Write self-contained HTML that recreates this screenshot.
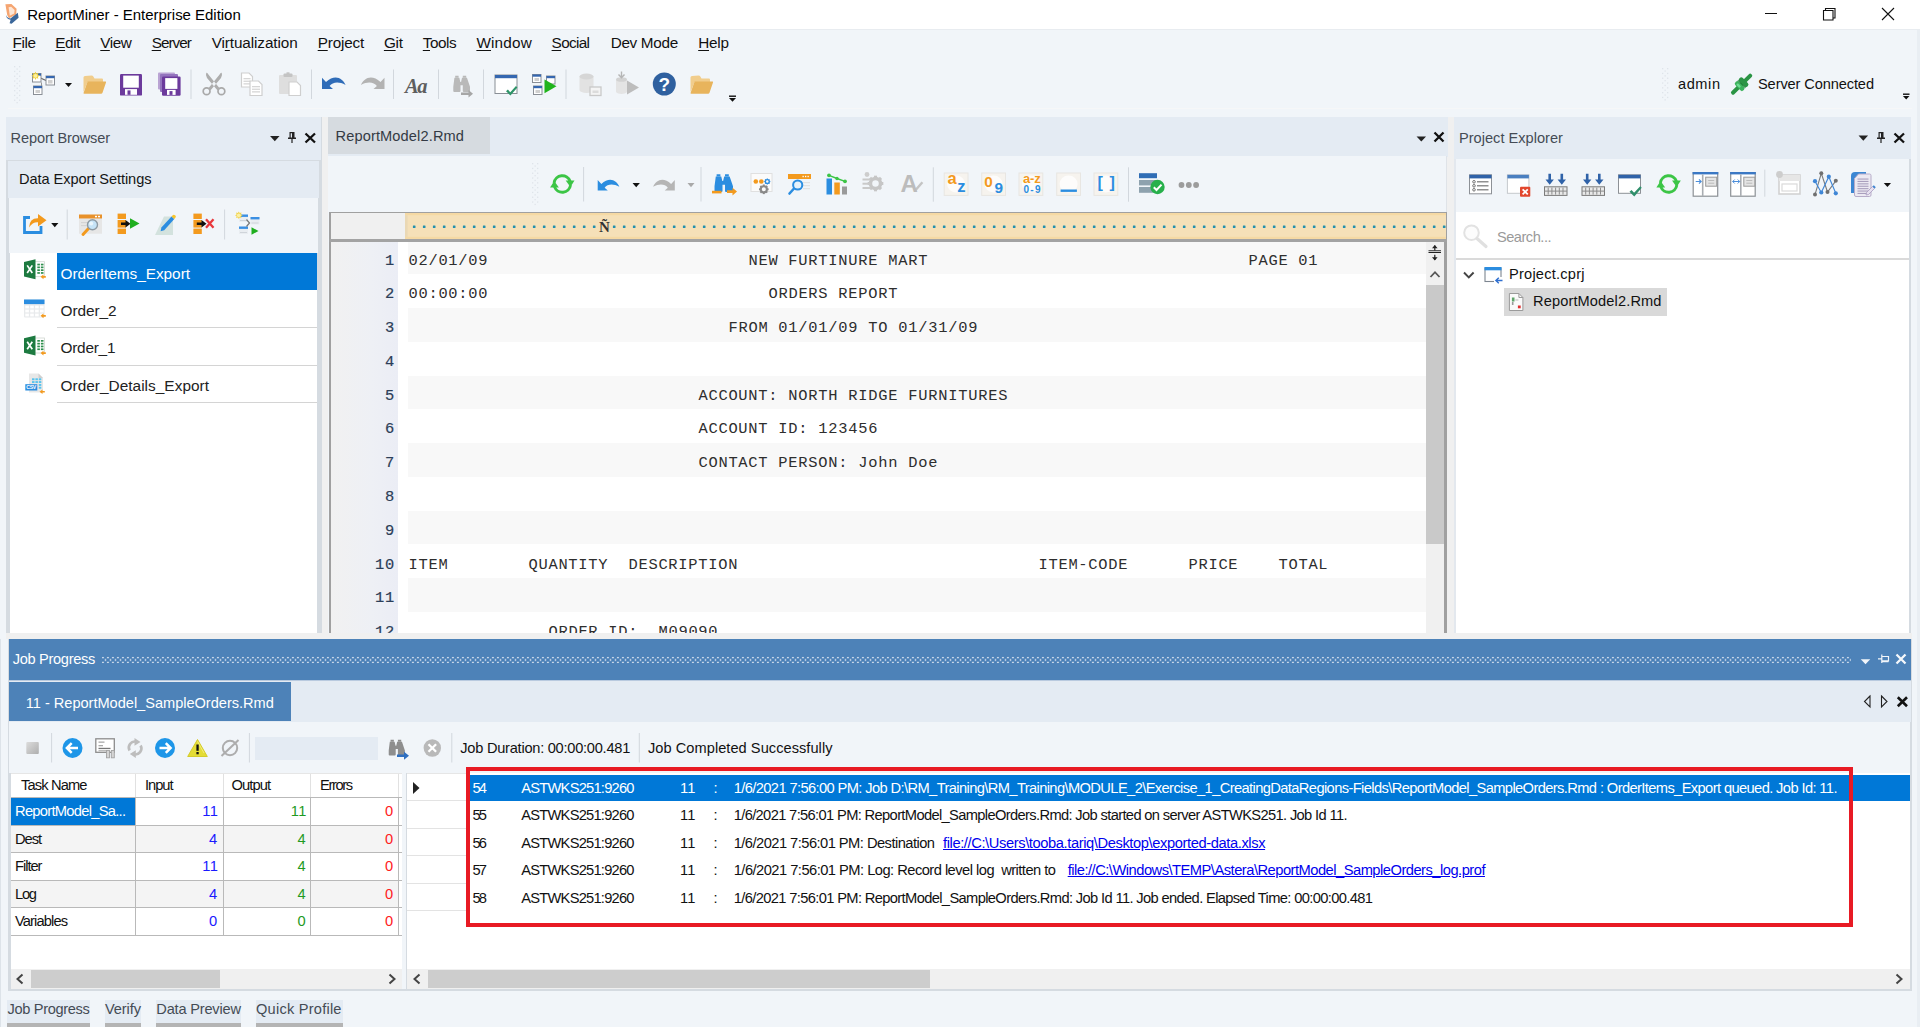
<!DOCTYPE html><html><head><meta charset="utf-8"><title>ReportMiner - Enterprise Edition</title><style>

html,body{margin:0;padding:0;}
body{width:1920px;height:1027px;overflow:hidden;background:#f1f5f9;position:relative;font-family:"Liberation Sans",sans-serif;}
#r div,#r svg,#r span{position:absolute;}
#r span{white-space:pre;line-height:1;}
#r span u{text-decoration:underline;text-underline-offset:2px;text-decoration-thickness:1px;}
#r span a{color:#0000ee;text-decoration:underline;}

</style></head><body><div id="r">
<div style="left:0px;top:0px;width:1920px;height:29px;background:#fff;"></div>
<div style="left:0px;top:29px;width:1920px;height:1px;background:#e8ecf0;"></div>
<div style="left:8px;top:108px;width:1904px;height:1px;background:#f6f7f8;"></div>
<div style="left:1917px;top:30px;width:3px;height:997px;background:#e9eef3;"></div>
<div style="left:0px;top:639px;width:1px;height:388px;background:#dde3e9;"></div>
<div style="left:321px;top:117px;width:7px;height:516px;background:#f0f0f0;"></div>
<div style="left:1447px;top:117px;width:7.3px;height:516px;background:#f0f0f0;"></div>
<div style="left:6px;top:117px;width:315.5px;height:516px;background:#d5dbe1;"></div>
<div style="left:6px;top:117px;width:315px;height:43px;background:#e4ebf3;"></div>
<div style="left:8px;top:161px;width:311px;height:37px;background:#e4ebf3;"></div>
<div style="left:9px;top:198px;width:309px;height:55px;background:#f1f5f9;"></div>
<div style="left:10px;top:253px;width:307px;height:380px;background:#fff;"></div>
<div style="left:57px;top:253px;width:260px;height:36.5px;background:#0078d7;"></div>
<div style="left:57px;top:327px;width:260px;height:1px;background:#d4d4d4;"></div>
<div style="left:57px;top:364.5px;width:260px;height:1px;background:#d4d4d4;"></div>
<div style="left:57px;top:402px;width:260px;height:1px;background:#d4d4d4;"></div>
<div style="left:328px;top:117px;width:1120px;height:39.5px;background:#e4ebf3;"></div>
<div style="left:328px;top:117px;width:162.4px;height:36.8px;background:#d6dbe0;"></div>
<div style="left:328px;top:156px;width:1119px;height:56px;background:#f1f5f9;"></div>
<div style="left:1446px;top:156px;width:1px;height:56px;background:#dfe3e8;"></div>
<div style="left:329px;top:212px;width:1117.5px;height:421px;background:#a0a0a0;"></div>
<div style="left:330.8px;top:213.3px;width:74.6px;height:26px;background:#f0f0f0;"></div>
<div style="left:405.4px;top:213.3px;width:1040.5px;height:26px;background:#f5e0b8;box-shadow:inset 0 2.3px 0 0 #f5d9a4,inset 0 -2.3px 0 0 #f5d9a4,inset 2.600px 0 0 0 #ead8b4;"></div>
<div style="left:329px;top:239.2px;width:1117.5px;height:2.5px;background:#a3a3a3;"></div>
<div style="left:330.8px;top:241.7px;width:1113.5px;height:391.3px;background:#fff;"></div>
<div style="left:330.8px;top:241.7px;width:67.2px;height:391.3px;background:linear-gradient(90deg,#f1f1f1 0%,#eef0f5 60%,#ebedf5 100%);"></div>
<div style="left:408px;top:241.7px;width:1018px;height:32.5px;background:#f8f8f8;"></div>
<div style="left:408px;top:308.0px;width:1018px;height:33.8px;background:#f8f8f8;"></div>
<div style="left:408px;top:375.5px;width:1018px;height:33.8px;background:#f8f8f8;"></div>
<div style="left:408px;top:443.1px;width:1018px;height:33.8px;background:#f8f8f8;"></div>
<div style="left:408px;top:510.6px;width:1018px;height:33.8px;background:#f8f8f8;"></div>
<div style="left:408px;top:578.2px;width:1018px;height:33.8px;background:#f8f8f8;"></div>
<div style="left:1426px;top:241.7px;width:18.3px;height:391.3px;background:#f0f0f0;"></div>
<div style="left:1426px;top:285px;width:18.3px;height:259px;background:#c9c9c9;"></div>
<div style="left:1454px;top:117px;width:457px;height:516px;background:#d5dbe1;"></div>
<div style="left:1454px;top:117px;width:457px;height:42px;background:#e4ebf3;"></div>
<div style="left:1456px;top:159px;width:453px;height:53px;background:#f1f5f9;"></div>
<div style="left:1456px;top:212px;width:453px;height:46px;background:#fff;"></div>
<div style="left:1456px;top:258px;width:453px;height:2px;background:#dadada;"></div>
<div style="left:1456px;top:260px;width:453px;height:373px;background:#fff;"></div>
<div style="left:1504px;top:288.4px;width:163px;height:27.2px;background:#d9d9d9;"></div>
<div style="left:1454px;top:159px;width:2px;height:474px;background:#e3e8ee;"></div>
<div style="left:6px;top:633px;width:1906px;height:6px;background:#f0f0f0;"></div>
<div style="left:8px;top:639px;width:1904px;height:352px;background:#d5dbe1;"></div>
<div style="left:9px;top:639px;width:1902px;height:41px;background:#4d82b8;"></div>
<div style="left:9px;top:680px;width:1902px;height:1px;background:#b9cadf;"></div>
<div style="left:9px;top:681px;width:1902px;height:41px;background:#e4ebf3;"></div>
<div style="left:9px;top:682px;width:282px;height:39px;background:#4d82b8;"></div>
<div style="left:9px;top:722px;width:1901px;height:51px;background:#f1f5f9;"></div>
<div style="left:11px;top:773px;width:391px;height:196px;background:#fff;"></div>
<div style="left:11px;top:969px;width:391px;height:20px;background:#f0f0f0;"></div>
<div style="left:31px;top:970px;width:189px;height:18px;background:#cdcdcd;"></div>
<div style="left:402px;top:773px;width:5px;height:216px;background:#f1f5f9;"></div>
<div style="left:406px;top:773px;width:1px;height:216px;background:#d5dbe1;"></div>
<div style="left:407px;top:773px;width:1503px;height:196px;background:#fff;"></div>
<div style="left:407px;top:969px;width:1503px;height:20px;background:#f0f0f0;"></div>
<div style="left:428px;top:970px;width:502px;height:18px;background:#cdcdcd;"></div>
<div style="left:11px;top:824.6px;width:387px;height:27.600000000000023px;background:#f4f4f4;"></div>
<div style="left:11px;top:879.8px;width:387px;height:27.600000000000023px;background:#f4f4f4;"></div>
<div style="left:11px;top:797px;width:124px;height:27.6px;background:#0078d7;"></div>
<div style="left:11px;top:797px;width:391px;height:1px;background:#b9b9b9;"></div>
<div style="left:11px;top:824.6px;width:391px;height:1px;background:#b9b9b9;"></div>
<div style="left:11px;top:852.2px;width:391px;height:1px;background:#b9b9b9;"></div>
<div style="left:11px;top:879.8px;width:391px;height:1px;background:#b9b9b9;"></div>
<div style="left:11px;top:907.4px;width:391px;height:1px;background:#b9b9b9;"></div>
<div style="left:11px;top:935px;width:391px;height:1px;background:#b9b9b9;"></div>
<div style="left:135px;top:797px;width:1px;height:138px;background:#b9b9b9;"></div>
<div style="left:223px;top:797px;width:1px;height:138px;background:#b9b9b9;"></div>
<div style="left:310px;top:797px;width:1px;height:138px;background:#b9b9b9;"></div>
<div style="left:398px;top:797px;width:1px;height:138px;background:#b9b9b9;"></div>
<div style="left:135px;top:773px;width:1px;height:24px;background:#e1e1e1;"></div>
<div style="left:223px;top:773px;width:1px;height:24px;background:#e1e1e1;"></div>
<div style="left:310px;top:773px;width:1px;height:24px;background:#e1e1e1;"></div>
<div style="left:398px;top:773px;width:1px;height:24px;background:#e1e1e1;"></div>
<div style="left:11px;top:773px;width:391px;height:1px;background:#e6e6e6;"></div>
<div style="left:407px;top:773px;width:60px;height:1px;background:#e6e6e6;"></div>
<div style="left:407px;top:800.4px;width:60px;height:1px;background:#e3e3e3;"></div>
<div style="left:407px;top:827.8px;width:60px;height:1px;background:#e3e3e3;"></div>
<div style="left:407px;top:855.2px;width:60px;height:1px;background:#e3e3e3;"></div>
<div style="left:407px;top:882.6px;width:60px;height:1px;background:#e3e3e3;"></div>
<div style="left:407px;top:910px;width:60px;height:1px;background:#e3e3e3;"></div>
<div style="left:466px;top:774.5px;width:1444px;height:26px;background:#0078d7;"></div>
<div style="left:466px;top:767px;width:1387px;height:160px;background:transparent;border:4px solid #e81a24;box-sizing:border-box;"></div>
<div style="left:7px;top:1000px;width:83px;height:23px;background:#e4ebf3;"></div>
<div style="left:7px;top:1023px;width:83px;height:4px;background:#b4b4b4;"></div>
<div style="left:105px;top:1000px;width:36px;height:23px;background:#e4ebf3;"></div>
<div style="left:105px;top:1023px;width:36px;height:4px;background:#b4b4b4;"></div>
<div style="left:156px;top:1000px;width:85px;height:23px;background:#e4ebf3;"></div>
<div style="left:156px;top:1023px;width:85px;height:4px;background:#b4b4b4;"></div>
<div style="left:256px;top:1000px;width:87px;height:23px;background:#e4ebf3;"></div>
<div style="left:256px;top:1023px;width:87px;height:4px;background:#b4b4b4;"></div>
<div style="left:255px;top:737px;width:122.5px;height:22.5px;background:#e4ebf3;"></div>
<svg style="left:0;top:0" width="1920" height="1027" viewBox="0 0 1920 1027"><path d="M5.400 4.200L11.400 4L16.600 8.800L16.200 14.600L9 18.200L7.200 15z" fill="#f5a571"/><path d="M8.600 7.200L11.200 6.800L14.600 10L14.200 13.600L9.800 15.800z" fill="#fde6d6"/><path d="M5.800 14.600Q7 18.600 10.400 18.400L17.800 12.800L18.600 17.800L11.600 23.800L9.600 23.200L10.600 19.800Q6.400 19.600 5.800 14.600z" fill="#3b679b"/><path d="M1765 13.5h12" stroke="#111" stroke-width="1"/><path d="M1823.5 10.5h9.500v9.500h-9.500z M1825.500 10.500v-2h9.500v9.500h-2" fill="none" stroke="#111" stroke-width="1.1"/><path d="M1882 8l12 12M1894 8l-12 12" stroke="#111" stroke-width="1.1"/><rect x="14" y="66.0" width="1.300" height="1.300" fill="#dfe4ea"/><rect x="19" y="66.0" width="1.300" height="1.300" fill="#dfe4ea"/><rect x="16.5" y="68.4" width="1.300" height="1.300" fill="#dfe4ea"/><rect x="14" y="70.8" width="1.300" height="1.300" fill="#dfe4ea"/><rect x="19" y="70.8" width="1.300" height="1.300" fill="#dfe4ea"/><rect x="16.5" y="73.2" width="1.300" height="1.300" fill="#dfe4ea"/><rect x="14" y="75.6" width="1.300" height="1.300" fill="#dfe4ea"/><rect x="19" y="75.6" width="1.300" height="1.300" fill="#dfe4ea"/><rect x="16.5" y="78.0" width="1.300" height="1.300" fill="#dfe4ea"/><rect x="14" y="80.4" width="1.300" height="1.300" fill="#dfe4ea"/><rect x="19" y="80.4" width="1.300" height="1.300" fill="#dfe4ea"/><rect x="16.5" y="82.8" width="1.300" height="1.300" fill="#dfe4ea"/><rect x="14" y="85.2" width="1.300" height="1.300" fill="#dfe4ea"/><rect x="19" y="85.2" width="1.300" height="1.300" fill="#dfe4ea"/><rect x="16.5" y="87.6" width="1.300" height="1.300" fill="#dfe4ea"/><rect x="14" y="90.0" width="1.300" height="1.300" fill="#dfe4ea"/><rect x="19" y="90.0" width="1.300" height="1.300" fill="#dfe4ea"/><rect x="16.5" y="92.4" width="1.300" height="1.300" fill="#dfe4ea"/><rect x="14" y="94.8" width="1.300" height="1.300" fill="#dfe4ea"/><rect x="19" y="94.8" width="1.300" height="1.300" fill="#dfe4ea"/><rect x="16.5" y="97.2" width="1.300" height="1.300" fill="#dfe4ea"/><rect x="14" y="99.6" width="1.300" height="1.300" fill="#dfe4ea"/><rect x="19" y="99.6" width="1.300" height="1.300" fill="#dfe4ea"/><rect x="16.5" y="102.0" width="1.300" height="1.300" fill="#dfe4ea"/><path d="M36 76L46 80.500" stroke="#666" stroke-width="1.3"/><path d="M41.500 82.500v7.500" stroke="#999" stroke-width="1"/><rect x="32.5" y="73.5" width="8.5" height="8.5" fill="#fff" stroke="#8a8f96" stroke-width="1"/><rect x="32.5" y="73.5" width="8.5" height="2.2" fill="#3567b0"/><rect x="46" y="76" width="8.5" height="9" fill="#fff" stroke="#8a8f96" stroke-width="1"/><rect x="46" y="76" width="8.5" height="2.2" fill="#3567b0"/><rect x="33.5" y="86" width="8.5" height="8.5" fill="#fff" stroke="#8a8f96" stroke-width="1"/><rect x="33.5" y="86" width="8.5" height="2.2" fill="#3567b0"/><path d="M35.5 71.600l.9 1.900 2-.6-.6 2 1.900.9-1.900.9.600 2-2-.6-.9 1.900-.9-1.900-2 .6.600-2-1.900-.9 1.900-.9-.6-2 2 .6z" fill="#f2d23f"/><circle cx="35.5" cy="75.800" r="1.900" fill="#fbf0a0"/><rect x="48" y="80" width="4.500" height="3.500" fill="#d0d0d0"/><rect x="35.5" y="90" width="4.500" height="3" fill="#d0d0d0"/><path d="M65.0 83h7l-3.5 4z" fill="#111"/><g transform="translate(83,75) scale(1.0)"><path d="M0.5 2.5Q0.5 1 2 1L8.5 0.5Q9.8 0.5 10.5 1.8L11.5 3.5L19 3.5Q20 3.5 20 4.8L20 7L4.5 7L0.5 17z" fill="#f1cd8c"/><path d="M4.6 6.5L22.6 6.5Q23.3 6.5 23 7.4L19.4 18Q19.1 18.8 18.2 18.8L1.2 18.8Q0.2 18.8 0.6 17.8z" fill="#e8b45c"/></g><g transform="translate(120,74)"><path d="M0 1.2Q0 0 1.2 0L20.8 0Q22 0 22 1.2L22 20.400000000000002Q22 21.6 20.8 21.6L1.2 21.6Q0 21.6 0 20.400000000000002z" fill="#6c3a9c"/><rect x="3.2" y="1.6" width="15.6" height="12.1" fill="#fff"/><rect x="5" y="15.1" width="12" height="5.7" fill="#fff"/><rect x="7.5" y="16.4" width="3" height="4.4" fill="#6c3a9c"/></g><rect x="158" y="72.500" width="17" height="17" rx="1" fill="#b9a3d3"/><rect x="160" y="74" width="18" height="18" rx="1" fill="#9474bd"/><g transform="translate(162,76.5)"><path d="M0 1.2Q0 0 1.2 0L17.400000000000002 0Q18.6 0 18.6 1.2L18.6 18.0Q18.6 19.2 17.400000000000002 19.2L1.2 19.2Q0 19.2 0 18.0z" fill="#6c3a9c"/><rect x="3.2" y="1.6" width="12.200000000000001" height="10.8" fill="#fff"/><rect x="5" y="13.4" width="8.600000000000001" height="5.0" fill="#fff"/><rect x="7.5" y="14.6" width="3" height="3.8" fill="#6c3a9c"/></g><rect x="190.5" y="69.5" width="1" height="29.5" fill="#d2d7dd"/><g fill="none" stroke="#a9a9a9"><circle cx="206.600" cy="91.300" r="3.400" stroke-width="1.700"/><circle cx="221.400" cy="91.300" r="3.400" stroke-width="1.700"/></g><path d="M206.300 72.800Q207.600 72.600 208.400 74.600L219.800 88.600L217.400 90.300L207 78Q205.300 75 206.300 72.800z M221.700 72.800Q220.400 72.600 219.600 74.600L208.200 88.600L210.600 90.300L221 78Q222.700 75 221.700 72.800z" fill="#adadad"/><path d="M241.5 73h7.5l3.5 3.5v10.5h-11z" fill="#fff" stroke="#cfcfcf" stroke-width="1.2"/><rect x="243.5" y="78.0" width="7" height="1.300" fill="#d6d6d6"/><rect x="243.5" y="80.6" width="7" height="1.300" fill="#d6d6d6"/><rect x="243.5" y="83.2" width="7" height="1.300" fill="#d6d6d6"/><path d="M250 81h8.5l3.5 3.5v11.0h-12z" fill="#fff" stroke="#cfcfcf" stroke-width="1.2"/><rect x="252" y="86.0" width="8" height="1.300" fill="#d6d6d6"/><rect x="252" y="88.6" width="8" height="1.300" fill="#d6d6d6"/><rect x="252" y="91.2" width="8" height="1.300" fill="#d6d6d6"/><rect x="279" y="75" width="18" height="19" rx="1" fill="#dedede"/><rect x="283.500" y="73.500" width="9" height="3.500" rx="1" fill="#c4c4c4"/><rect x="286.500" y="72.300" width="3" height="2.500" fill="#c4c4c4"/><path d="M289 82h8.0l3.5 3.5v10.0h-11.5z" fill="#fff" stroke="#cfcfcf" stroke-width="1.2"/><rect x="311.0" y="69.5" width="1" height="29.5" fill="#d2d7dd"/><g transform="translate(322,75.5) scale(1.000,1.000)"><path d="M0 2.2L0 13.6L11 13.6L7.6 10.6C10.5 6.8 16.5 5.6 23.6 9.6C20.6 2.2 12.5 -1.6 4 6.6z" fill="#2f6cb8"/></g><g transform="translate(384.5,75.5) scale(-1,1) scale(1.000,1.000)"><path d="M0 2.2L0 13.6L11 13.6L7.6 10.6C10.5 6.8 16.5 5.6 23.6 9.6C20.6 2.2 12.5 -1.6 4 6.6z" fill="#b3b3b3"/></g><rect x="393.0" y="69.5" width="1" height="29.5" fill="#d2d7dd"/><rect x="438.0" y="69.5" width="1" height="29.5" fill="#d2d7dd"/><g transform="translate(451,75) scale(0.95)" fill="#b9b9b9"><path d="M4.4 0.8h3.6v2.2h-3.6z M12.4 0.8h3.6v2.2h-3.6z"/><path d="M3.6 3h5.2l1 4.4h0.8l1-4.4h5.2l3.2 9.4v4.4q0 1-1 1h-5.6q-1 0-1-1v-6h-2.4v6q0 1-1 1h-5.600q-1 0-1-1v-4.4z"/></g><path d="M461 92.500h7.500v-2.500l4.500 3.700-4.500 3.700v-2.500h-7.500z" fill="#a6a6a6"/><rect x="483.0" y="69.5" width="1" height="29.5" fill="#d2d7dd"/><rect x="495" y="75" width="22" height="18.5" fill="#fff" stroke="#8a8f96" stroke-width="1"/><rect x="495" y="75" width="22" height="3.2" fill="#3567b0"/><path transform="translate(506,86) scale(0.95)" d="M0 5.500L2 3.800L4.500 6.500L10.500 0L12 1.500L4.700 10z" fill="#2e9468"/><rect x="532.5" y="74.5" width="8.5" height="8" fill="#fff" stroke="#8a8f96" stroke-width="1"/><rect x="532.5" y="74.5" width="8.5" height="2.2" fill="#3567b0"/><rect x="546.5" y="76" width="8.5" height="8" fill="#fff" stroke="#8a8f96" stroke-width="1"/><rect x="546.5" y="76" width="8.5" height="2.2" fill="#3567b0"/><rect x="533.5" y="86" width="8.5" height="8.5" fill="#fff" stroke="#8a8f96" stroke-width="1"/><rect x="533.5" y="86" width="8.5" height="2.2" fill="#3567b0"/><rect x="534.500" y="78" width="4.500" height="3" fill="#d0d0d0"/><rect x="535.500" y="90" width="4.500" height="3" fill="#d0d0d0"/><path d="M544.500 79.500L556.500 86.300L544.500 93.200z" fill="#20b41c"/><rect x="565.5" y="69.5" width="1" height="29.5" fill="#d2d7dd"/><path d="M579.500 76.500v13.500a7 3 0 0 0 14 0v-13.500z" fill="#e2e2e2"/><ellipse cx="586.500" cy="76.500" rx="7" ry="3" fill="#d6d6d6"/><rect x="590" y="87" width="11" height="8.500" fill="#f4f4f4" stroke="#c9c9c9" stroke-width="1.300"/><rect x="592.500" y="90.500" width="6" height="2.500" fill="#dcdcdc"/><path d="M616 79.500v12a5.500 2.500 0 0 0 11 0v-12z" fill="#e4e4e4"/><ellipse cx="621.500" cy="79.500" rx="5.500" ry="2.300" fill="#d2d2d2"/><path d="M621.500 71.500v6M618.500 74.500l3 3.300 3-3.300" fill="none" stroke="#b5b5b5" stroke-width="1.400"/><path d="M627 80.500L639 87.500L627 94.500z" fill="#bdbdbd"/><circle cx="664.300" cy="84" r="11.500" fill="#2f609f"/><text x="664.300" y="91" font-family="Liberation Sans,sans-serif" font-weight="bold" font-size="19" fill="#fff" text-anchor="middle">?</text><g transform="translate(690,75) scale(1.0)"><path d="M0.5 2.5Q0.5 1 2 1L8.5 0.5Q9.8 0.5 10.5 1.8L11.5 3.5L19 3.5Q20 3.5 20 4.8L20 7L4.5 7L0.5 17z" fill="#f1cd8c"/><path d="M4.6 6.5L22.6 6.5Q23.3 6.5 23 7.4L19.4 18Q19.1 18.8 18.2 18.8L1.2 18.8Q0.2 18.8 0.6 17.8z" fill="#e8b45c"/></g><rect x="729" y="95.500" width="7" height="1.400" fill="#111"/><path d="M729.0 98h7l-3.5 3.8z" fill="#111"/><rect x="1662" y="68.0" width="1.300" height="1.300" fill="#dfe4ea"/><rect x="1667" y="68.0" width="1.300" height="1.300" fill="#dfe4ea"/><rect x="1664.5" y="70.4" width="1.300" height="1.300" fill="#dfe4ea"/><rect x="1662" y="72.8" width="1.300" height="1.300" fill="#dfe4ea"/><rect x="1667" y="72.8" width="1.300" height="1.300" fill="#dfe4ea"/><rect x="1664.5" y="75.2" width="1.300" height="1.300" fill="#dfe4ea"/><rect x="1662" y="77.6" width="1.300" height="1.300" fill="#dfe4ea"/><rect x="1667" y="77.6" width="1.300" height="1.300" fill="#dfe4ea"/><rect x="1664.5" y="80.0" width="1.300" height="1.300" fill="#dfe4ea"/><rect x="1662" y="82.4" width="1.300" height="1.300" fill="#dfe4ea"/><rect x="1667" y="82.4" width="1.300" height="1.300" fill="#dfe4ea"/><rect x="1664.5" y="84.8" width="1.300" height="1.300" fill="#dfe4ea"/><rect x="1662" y="87.2" width="1.300" height="1.300" fill="#dfe4ea"/><rect x="1667" y="87.2" width="1.300" height="1.300" fill="#dfe4ea"/><rect x="1664.5" y="89.6" width="1.300" height="1.300" fill="#dfe4ea"/><rect x="1662" y="92.0" width="1.300" height="1.300" fill="#dfe4ea"/><rect x="1667" y="92.0" width="1.300" height="1.300" fill="#dfe4ea"/><rect x="1664.5" y="94.4" width="1.300" height="1.300" fill="#dfe4ea"/><rect x="1662" y="96.8" width="1.300" height="1.300" fill="#dfe4ea"/><rect x="1667" y="96.8" width="1.300" height="1.300" fill="#dfe4ea"/><rect x="1664.5" y="99.2" width="1.300" height="1.300" fill="#dfe4ea"/><g transform="translate(1741.600,84.200) rotate(-44.5)"><rect x="-14" y="-2" width="28" height="4" rx="1.800" fill="#2a9444"/><rect x="-5.200" y="-5.700" width="5" height="11.400" rx="2.200" fill="#3cb25c"/><rect x="0.200" y="-5.700" width="5" height="11.400" rx="2.200" fill="#2b9445"/><rect x="-4.300" y="-3.600" width="2.400" height="5" rx="1.200" fill="#6fdc92"/><rect x="-0.300" y="-5.500" width="0.800" height="11" fill="#1d7a35"/></g><rect x="1903" y="93.500" width="6.500" height="1.400" fill="#111"/><path d="M1902.95 96h6.5l-3.25 3.5z" fill="#111"/><path d="M270.05 136h9.5l-4.75 5.2z" fill="#222"/><path d="M289.5 132h5v5.500h1.500v1.400h-3.400v4h-1.200v-4h-3.400v-1.400h1.500z M290.7 133.2v4.300h1.300v-4.300z" fill="#222" fill-rule="evenodd"/><path d="M305.5 133.5L315 142.5M315 133.5L305.5 142.5" stroke="#111" stroke-width="2.3" fill="none"/><path d="M1416.55 136.4h9.5l-4.75 5.2z" fill="#222"/><path d="M1434.5 132.5L1443.5 141.5M1443.5 132.5L1434.5 141.5" stroke="#111" stroke-width="2.3" fill="none"/><path d="M1858.55 135.6h9.5l-4.75 5.2z" fill="#222"/><path d="M1878.5 132h5v5.500h1.500v1.400h-3.400v4h-1.200v-4h-3.400v-1.400h1.500z M1879.7 133.2v4.300h1.300v-4.300z" fill="#222" fill-rule="evenodd"/><path d="M1894.5 133.5L1904 142.5M1904 133.5L1894.5 142.5" stroke="#111" stroke-width="2.3" fill="none"/><path d="M30 217.500h-5.500v15h16.500v-6.500" fill="none" stroke="#2b8de0" stroke-width="2.800"/><path d="M29 227.500Q29.500 218 38 218.200L38 214L46.500 220.200L38 226.400L38 222.300Q32.500 222 29 227.500z" fill="#f39a1e"/><path d="M51.199999999999996 223h7.2l-3.6 4.2z" fill="#111"/><rect x="66.7" y="209.5" width="1" height="30.0" fill="#d2d7dd"/><rect x="79" y="214.500" width="23" height="4.200" fill="#e8912a"/><rect x="79" y="218.700" width="23" height="15" fill="#e6e6e6"/><rect x="95" y="215.800" width="2" height="1.500" fill="#fff"/><rect x="98" y="215.800" width="2" height="1.500" fill="#fff"/><rect x="81" y="222" width="7" height="1.200" fill="#d4d4d4"/><rect x="81" y="225" width="6" height="1.200" fill="#d4d4d4"/><path d="M88.500 228.500L83 234.500" stroke="#f39a1e" stroke-width="3" stroke-linecap="round"/><circle cx="92.500" cy="224.800" r="5" fill="#c6e4f8" stroke="#8e9aa3" stroke-width="1.400"/><circle cx="91.200" cy="223.500" r="2" fill="#eaf6fd"/><rect x="117.6" y="213.6" width="8.400" height="5.4" fill="#f39a1e"/><rect x="117.6" y="220" width="8.400" height="7.6" fill="#f39a1e"/><rect x="117.6" y="228.6" width="8.400" height="5.4" fill="#f39a1e"/><path d="M121 222.5h4.5v-2.400l5 3.700-5 3.700v-2.400h-4.5z" fill="#111"/><path d="M130 218.300L139.500 223.500L130 228.700z" fill="#1fae1f"/><path d="M155 235L173 235L173 216.500L164 216.500z" fill="#d3e2de"/><path d="M161.400 227.600L171.500 216.500L174.300 219L164.200 230.200L160.600 231.300z" fill="#2b8de0"/><path d="M171.500 216.500L173 214.900Q174 214.300 175 215.200L175.600 215.800Q176.300 216.800 175.500 217.600L174.300 219z" fill="#f7c52e"/><rect x="193.4" y="213.6" width="8.400" height="5.4" fill="#f39a1e"/><rect x="193.4" y="220" width="8.400" height="7.6" fill="#f39a1e"/><rect x="193.4" y="228.6" width="8.400" height="5.4" fill="#f39a1e"/><path d="M196.8 222.5h4.699999999999989v-2.400l5 3.700-5 3.700v-2.400h-4.699999999999989z" fill="#111"/><path d="M206 219.200L213.500 227.800M213.500 219.200L206 227.800" stroke="#e8383d" stroke-width="2.300"/><rect x="224.1" y="209.5" width="1" height="30.0" fill="#d2d7dd"/><rect x="239" y="214.5" width="9" height="7.5" fill="#e9edf1"/><rect x="239" y="214.5" width="9" height="2.400" fill="#3a8fe3"/><rect x="240" y="220.0" width="7" height="1" fill="#cfd4da"/><rect x="250.5" y="217" width="9" height="7.5" fill="#e9edf1"/><rect x="250.5" y="217" width="9" height="2.400" fill="#3a8fe3"/><rect x="251.5" y="222.5" width="7" height="1" fill="#cfd4da"/><rect x="239" y="226.5" width="9" height="7.5" fill="#e9edf1"/><rect x="239" y="226.5" width="9" height="2.400" fill="#3a8fe3"/><rect x="240" y="232.0" width="7" height="1" fill="#cfd4da"/><path d="M246.500 219.500l3 3.500-3 3.500" fill="none" stroke="#777" stroke-width="1.200"/><polygon points="242.60,215.30 240.98,216.20 241.49,217.99 239.70,217.48 238.80,219.10 237.90,217.48 236.11,217.99 236.62,216.20 235.00,215.30 236.62,214.40 236.11,212.61 237.90,213.12 238.80,211.50 239.70,213.12 241.49,212.61 240.98,214.40" fill="#f2d34b"/><circle cx="238.8" cy="215.3" r="1.90" fill="#fbf0a5"/><path d="M251.500 227.300L258.500 231L251.500 234.700z" fill="#1fae1f"/><g transform="translate(24,259.2)"><rect x="9" y="2.500" width="11.500" height="15" fill="#fff" stroke="#cfd6cf" stroke-width=".8"/><rect x="13.3" y="4.5" width="2.600" height="1.700" fill="#2f8f4e"/><rect x="13.3" y="7.3" width="2.600" height="1.700" fill="#2f8f4e"/><rect x="13.3" y="10.1" width="2.600" height="1.700" fill="#2f8f4e"/><rect x="13.3" y="12.9" width="2.600" height="1.700" fill="#2f8f4e"/><rect x="16.9" y="4.5" width="2.600" height="1.700" fill="#2f8f4e"/><rect x="16.9" y="7.3" width="2.600" height="1.700" fill="#2f8f4e"/><rect x="16.9" y="10.1" width="2.600" height="1.700" fill="#2f8f4e"/><rect x="16.9" y="12.9" width="2.600" height="1.700" fill="#2f8f4e"/><path d="M0 2.800L11.500 0L11.500 20L0 17.200z" fill="#1d7a40"/><path d="M3.200 6.200L8.300 13.800M8.300 6.200L3.200 13.800" stroke="#fff" stroke-width="1.700"/><path d="M16.500 17.600l3-2.300v1.500h2.300v1.700h-2.300v1.500z" fill="#f39a1e"/></g><g transform="translate(24,335.5)"><rect x="9" y="2.500" width="11.500" height="15" fill="#fff" stroke="#cfd6cf" stroke-width=".8"/><rect x="13.3" y="4.5" width="2.600" height="1.700" fill="#2f8f4e"/><rect x="13.3" y="7.3" width="2.600" height="1.700" fill="#2f8f4e"/><rect x="13.3" y="10.1" width="2.600" height="1.700" fill="#2f8f4e"/><rect x="13.3" y="12.9" width="2.600" height="1.700" fill="#2f8f4e"/><rect x="16.9" y="4.5" width="2.600" height="1.700" fill="#2f8f4e"/><rect x="16.9" y="7.3" width="2.600" height="1.700" fill="#2f8f4e"/><rect x="16.9" y="10.1" width="2.600" height="1.700" fill="#2f8f4e"/><rect x="16.9" y="12.9" width="2.600" height="1.700" fill="#2f8f4e"/><path d="M0 2.800L11.500 0L11.500 20L0 17.200z" fill="#1d7a40"/><path d="M3.200 6.200L8.300 13.800M8.300 6.200L3.200 13.800" stroke="#fff" stroke-width="1.700"/><path d="M16.500 17.600l3-2.300v1.500h2.300v1.700h-2.300v1.500z" fill="#f39a1e"/></g><rect x="24" y="299.500" width="20.500" height="18" rx="1" fill="#e8eaec"/><rect x="24" y="299.500" width="20.500" height="4.600" fill="#2b8de0"/><rect x="25.3" y="305.6" width="3.600" height="2.800" fill="#fff"/><rect x="25.3" y="309.6" width="3.600" height="2.800" fill="#fff"/><rect x="25.3" y="313.6" width="3.600" height="2.800" fill="#fff"/><rect x="30.2" y="305.6" width="3.600" height="2.800" fill="#fff"/><rect x="30.2" y="309.6" width="3.600" height="2.800" fill="#fff"/><rect x="30.2" y="313.6" width="3.600" height="2.800" fill="#fff"/><rect x="35.1" y="305.6" width="3.600" height="2.800" fill="#fff"/><rect x="35.1" y="309.6" width="3.600" height="2.800" fill="#fff"/><rect x="35.1" y="313.6" width="3.600" height="2.800" fill="#fff"/><rect x="40.0" y="305.6" width="3.600" height="2.800" fill="#fff"/><rect x="40.0" y="309.6" width="3.600" height="2.800" fill="#fff"/><rect x="40.0" y="313.6" width="3.600" height="2.800" fill="#fff"/><path d="M40.500 315.800l3-2.300v1.500h2.300v1.700h-2.300v1.500z" fill="#f39a1e"/><path d="M29 373.500h9.500l4.500 4.500v14.500h-14z" fill="#e7e7e7"/><path d="M38.500 373.500v4.500h4.500z" fill="#cfcfcf"/><rect x="32.0" y="378.3" width="2.500" height="1.900" fill="#58c4ee"/><rect x="32.0" y="381.1" width="2.500" height="1.900" fill="#58c4ee"/><rect x="35.4" y="378.3" width="2.500" height="1.900" fill="#58c4ee"/><rect x="35.4" y="381.1" width="2.500" height="1.900" fill="#58c4ee"/><rect x="38.8" y="378.3" width="2.500" height="1.900" fill="#58c4ee"/><rect x="38.8" y="381.1" width="2.500" height="1.900" fill="#58c4ee"/><rect x="38.800" y="384.0" width="2.500" height="1.900" fill="#58c4ee"/><rect x="38.800" y="386.8" width="2.500" height="1.900" fill="#58c4ee"/><rect x="25.300" y="384.200" width="12" height="6.300" fill="#2b8de0"/><path d="M39.500 391.700l3-2.300v1.500h2.300v1.700h-2.300v1.500z" fill="#f39a1e" transform="scale(1,1)"/><rect x="532" y="163.0" width="1.300" height="1.300" fill="#dfe4ea"/><rect x="537" y="163.0" width="1.300" height="1.300" fill="#dfe4ea"/><rect x="534.5" y="165.4" width="1.300" height="1.300" fill="#dfe4ea"/><rect x="532" y="167.8" width="1.300" height="1.300" fill="#dfe4ea"/><rect x="537" y="167.8" width="1.300" height="1.300" fill="#dfe4ea"/><rect x="534.5" y="170.2" width="1.300" height="1.300" fill="#dfe4ea"/><rect x="532" y="172.6" width="1.300" height="1.300" fill="#dfe4ea"/><rect x="537" y="172.6" width="1.300" height="1.300" fill="#dfe4ea"/><rect x="534.5" y="175.0" width="1.300" height="1.300" fill="#dfe4ea"/><rect x="532" y="177.4" width="1.300" height="1.300" fill="#dfe4ea"/><rect x="537" y="177.4" width="1.300" height="1.300" fill="#dfe4ea"/><rect x="534.5" y="179.8" width="1.300" height="1.300" fill="#dfe4ea"/><rect x="532" y="182.2" width="1.300" height="1.300" fill="#dfe4ea"/><rect x="537" y="182.2" width="1.300" height="1.300" fill="#dfe4ea"/><rect x="534.5" y="184.6" width="1.300" height="1.300" fill="#dfe4ea"/><rect x="532" y="187.0" width="1.300" height="1.300" fill="#dfe4ea"/><rect x="537" y="187.0" width="1.300" height="1.300" fill="#dfe4ea"/><rect x="534.5" y="189.4" width="1.300" height="1.300" fill="#dfe4ea"/><rect x="532" y="191.8" width="1.300" height="1.300" fill="#dfe4ea"/><rect x="537" y="191.8" width="1.300" height="1.300" fill="#dfe4ea"/><rect x="534.5" y="194.2" width="1.300" height="1.300" fill="#dfe4ea"/><rect x="532" y="196.6" width="1.300" height="1.300" fill="#dfe4ea"/><rect x="537" y="196.6" width="1.300" height="1.300" fill="#dfe4ea"/><rect x="534.5" y="199.0" width="1.300" height="1.300" fill="#dfe4ea"/><rect x="532" y="201.4" width="1.300" height="1.300" fill="#dfe4ea"/><rect x="537" y="201.4" width="1.300" height="1.300" fill="#dfe4ea"/><rect x="534.5" y="203.8" width="1.300" height="1.300" fill="#dfe4ea"/><path d="M554.08 182.84A8.3 8.3 0 0 1 570.10 181.16" fill="none" stroke="#3cc546" stroke-width="2.9"/><path d="M570.52 185.16A8.3 8.3 0 0 1 554.50 186.84" fill="none" stroke="#3cc546" stroke-width="2.9"/><path d="M565.70 180.40L574.50 180.40L570.40 187.00z" fill="#3cc546"/><path d="M550.10 187.60L558.90 187.60L554.20 181.00z" fill="#3cc546"/><rect x="583.1" y="167" width="1" height="34.5" fill="#d2d7dd"/><g transform="translate(597.7,178) scale(0.917,0.914)"><path d="M0 2.2L0 13.6L11 13.6L7.6 10.6C10.5 6.8 16.5 5.6 23.6 9.6C20.6 2.2 12.5 -1.6 4 6.6z" fill="#2b8de0"/></g><path d="M632.5500000000001 183h7.3l-3.65 4.3z" fill="#111"/><g transform="translate(674.8,178) scale(-1,1) scale(0.917,0.914)"><path d="M0 2.2L0 13.6L11 13.6L7.6 10.6C10.5 6.8 16.5 5.6 23.6 9.6C20.6 2.2 12.5 -1.6 4 6.6z" fill="#b5b5b5"/></g><path d="M687.5 183h7l-3.5 4.2z" fill="#a9a9a9"/><rect x="700.5" y="167" width="1" height="34.5" fill="#d2d7dd"/><g transform="translate(712,173.3) scale(1.05)" fill="#2b8de0"><path d="M4.4 0.8h3.6v2.2h-3.6z M12.4 0.8h3.6v2.2h-3.6z"/><path d="M3.6 3h5.2l1 4.4h0.8l1-4.4h5.2l3.2 9.4v4.4q0 1-1 1h-5.6q-1 0-1-1v-6h-2.4v6q0 1-1 1h-5.600q-1 0-1-1v-4.4z"/></g><rect x="712" y="190.800" width="9.500" height="2.600" fill="#f39a1e"/><path d="M727 190.300h5.500v-2.600l4.500 3.900-4.500 3.900v-2.600h-5.500z" fill="#f39a1e"/><rect x="751" y="173.500" width="21" height="18" fill="#fbfbfb" stroke="#e0e0e0" stroke-width="1"/><circle cx="755.800" cy="181.500" r="2.300" fill="#f39a1e"/><circle cx="761.300" cy="181.500" r="2.300" fill="#f39a1e"/><circle cx="767.3" cy="181.5" r="1.94" fill="none" stroke="#2b8de0" stroke-width="1.35"/><rect x="-0.59" y="-3.02" width="1.19" height="1.08" fill="#2b8de0" transform="translate(767.3,181.5) rotate(0.0)"/><rect x="-0.59" y="-3.02" width="1.19" height="1.08" fill="#2b8de0" transform="translate(767.3,181.5) rotate(45.0)"/><rect x="-0.59" y="-3.02" width="1.19" height="1.08" fill="#2b8de0" transform="translate(767.3,181.5) rotate(90.0)"/><rect x="-0.59" y="-3.02" width="1.19" height="1.08" fill="#2b8de0" transform="translate(767.3,181.5) rotate(135.0)"/><rect x="-0.59" y="-3.02" width="1.19" height="1.08" fill="#2b8de0" transform="translate(767.3,181.5) rotate(180.0)"/><rect x="-0.59" y="-3.02" width="1.19" height="1.08" fill="#2b8de0" transform="translate(767.3,181.5) rotate(225.0)"/><rect x="-0.59" y="-3.02" width="1.19" height="1.08" fill="#2b8de0" transform="translate(767.3,181.5) rotate(270.0)"/><rect x="-0.59" y="-3.02" width="1.19" height="1.08" fill="#2b8de0" transform="translate(767.3,181.5) rotate(315.0)"/><circle cx="763.8" cy="189.3" r="3.10" fill="none" stroke="#8a8a8a" stroke-width="2.15"/><rect x="-0.95" y="-4.82" width="1.89" height="1.72" fill="#8a8a8a" transform="translate(763.8,189.3) rotate(0.0)"/><rect x="-0.95" y="-4.82" width="1.89" height="1.72" fill="#8a8a8a" transform="translate(763.8,189.3) rotate(45.0)"/><rect x="-0.95" y="-4.82" width="1.89" height="1.72" fill="#8a8a8a" transform="translate(763.8,189.3) rotate(90.0)"/><rect x="-0.95" y="-4.82" width="1.89" height="1.72" fill="#8a8a8a" transform="translate(763.8,189.3) rotate(135.0)"/><rect x="-0.95" y="-4.82" width="1.89" height="1.72" fill="#8a8a8a" transform="translate(763.8,189.3) rotate(180.0)"/><rect x="-0.95" y="-4.82" width="1.89" height="1.72" fill="#8a8a8a" transform="translate(763.8,189.3) rotate(225.0)"/><rect x="-0.95" y="-4.82" width="1.89" height="1.72" fill="#8a8a8a" transform="translate(763.8,189.3) rotate(270.0)"/><rect x="-0.95" y="-4.82" width="1.89" height="1.72" fill="#8a8a8a" transform="translate(763.8,189.3) rotate(315.0)"/><rect x="788" y="174" width="23" height="5" fill="#f39a1e"/><rect x="802.5" y="175.800" width="1.300" height="1.400" fill="#fff"/><rect x="805" y="175.800" width="1.300" height="1.400" fill="#fff"/><rect x="807.5" y="175.800" width="1.300" height="1.400" fill="#fff"/><rect x="803" y="182" width="7" height="1.200" fill="#e2e2e2"/><rect x="803" y="185" width="7" height="1.200" fill="#e2e2e2"/><rect x="803" y="188" width="7" height="1.200" fill="#e2e2e2"/><path d="M794 188.500L789.500 193.500" stroke="#2b8de0" stroke-width="2.600" stroke-linecap="round"/><circle cx="797.700" cy="185" r="4.600" fill="#e6f2fb" stroke="#2b8de0" stroke-width="2"/><rect x="826.500" y="178.500" width="5.500" height="16" fill="#2b8de0"/><rect x="834.300" y="182.500" width="5.500" height="12" fill="#f39a1e"/><rect x="842" y="186.500" width="5" height="8" fill="#9a9a9a"/><path d="M829 175.300L837 178.500L845 181.300" fill="none" stroke="#3cc546" stroke-width="1.400"/><circle cx="829" cy="175.300" r="1.900" fill="#3cc546"/><circle cx="837" cy="178.500" r="1.700" fill="#3cc546"/><circle cx="845" cy="181.300" r="1.900" fill="#3cc546"/><circle cx="875.5" cy="183.5" r="5.04" fill="none" stroke="#c6c6c6" stroke-width="3.50"/><rect x="-1.54" y="-7.84" width="3.08" height="2.80" fill="#c6c6c6" transform="translate(875.5,183.5) rotate(0.0)"/><rect x="-1.54" y="-7.84" width="3.08" height="2.80" fill="#c6c6c6" transform="translate(875.5,183.5) rotate(45.0)"/><rect x="-1.54" y="-7.84" width="3.08" height="2.80" fill="#c6c6c6" transform="translate(875.5,183.5) rotate(90.0)"/><rect x="-1.54" y="-7.84" width="3.08" height="2.80" fill="#c6c6c6" transform="translate(875.5,183.5) rotate(135.0)"/><rect x="-1.54" y="-7.84" width="3.08" height="2.80" fill="#c6c6c6" transform="translate(875.5,183.5) rotate(180.0)"/><rect x="-1.54" y="-7.84" width="3.08" height="2.80" fill="#c6c6c6" transform="translate(875.5,183.5) rotate(225.0)"/><rect x="-1.54" y="-7.84" width="3.08" height="2.80" fill="#c6c6c6" transform="translate(875.5,183.5) rotate(270.0)"/><rect x="-1.54" y="-7.84" width="3.08" height="2.80" fill="#c6c6c6" transform="translate(875.5,183.5) rotate(315.0)"/><rect x="862.500" y="178.5" width="8" height="2" fill="#c9c9c9"/><rect x="862.500" y="182.7" width="8" height="2" fill="#c9c9c9"/><rect x="862.500" y="187" width="8" height="2" fill="#c9c9c9"/><circle cx="867" cy="174.500" r="2.400" fill="#cdcdcd"/><path d="M914.500 189.500L921.500 181.500L923.300 183L916.300 191L914 191.800z" fill="#c4c4c4"/><rect x="932.8" y="167.3" width="1" height="34.39999999999998" fill="#d2d7dd"/><rect x="944.2" y="173" width="23.800" height="22.400" fill="#f6f3ee" stroke="#e8e6e2" stroke-width="1"/><ellipse cx="956.1" cy="184" rx="9" ry="8.500" fill="#fdfcfb"/><rect x="981.7" y="173" width="23.800" height="22.400" fill="#f6f3ee" stroke="#e8e6e2" stroke-width="1"/><ellipse cx="993.6" cy="184" rx="9" ry="8.500" fill="#fdfcfb"/><rect x="1019" y="173" width="23.800" height="22.400" fill="#f6f3ee" stroke="#e8e6e2" stroke-width="1"/><ellipse cx="1030.9" cy="184" rx="9" ry="8.500" fill="#fdfcfb"/><rect x="1056.7" y="173" width="23.800" height="22.400" fill="#f6f3ee" stroke="#e8e6e2" stroke-width="1"/><ellipse cx="1068.6000000000001" cy="184" rx="9" ry="8.500" fill="#fdfcfb"/><rect x="1094" y="173" width="23.800" height="22.400" fill="#f6f3ee" stroke="#e8e6e2" stroke-width="1"/><ellipse cx="1105.9" cy="184" rx="9" ry="8.500" fill="#fdfcfb"/><rect x="1060.600" y="189.500" width="16.300" height="2.400" fill="#2b8de0"/><rect x="1128.0" y="167.3" width="1" height="34.39999999999998" fill="#d2d7dd"/><rect x="1139" y="173.200" width="18" height="5" fill="#2f6db5"/><rect x="1139" y="180" width="18" height="5.400" fill="#8ea2ae"/><rect x="1139" y="187" width="18" height="5.800" fill="#8ea2ae"/><circle cx="1157.500" cy="187" r="7.200" fill="#27b04b"/><path d="M1153.800 187.200l2.700 2.800 5-5.400" fill="none" stroke="#fff" stroke-width="2"/><circle cx="1181.5" cy="185" r="2.900" fill="#9c9c9c"/><circle cx="1188.8" cy="185" r="2.900" fill="#9c9c9c"/><circle cx="1196.1" cy="185" r="2.900" fill="#9c9c9c"/><rect x="412.9" y="225.500" width="2.600" height="2.600" rx=".5" fill="#2390ae"/><rect x="422.9" y="225.500" width="2.600" height="2.600" rx=".5" fill="#2390ae"/><rect x="432.9" y="225.500" width="2.600" height="2.600" rx=".5" fill="#2390ae"/><rect x="442.9" y="225.500" width="2.600" height="2.600" rx=".5" fill="#2390ae"/><rect x="452.9" y="225.500" width="2.600" height="2.600" rx=".5" fill="#2390ae"/><rect x="462.9" y="225.500" width="2.600" height="2.600" rx=".5" fill="#2390ae"/><rect x="472.9" y="225.500" width="2.600" height="2.600" rx=".5" fill="#2390ae"/><rect x="482.9" y="225.500" width="2.600" height="2.600" rx=".5" fill="#2390ae"/><rect x="492.9" y="225.500" width="2.600" height="2.600" rx=".5" fill="#2390ae"/><rect x="502.9" y="225.500" width="2.600" height="2.600" rx=".5" fill="#2390ae"/><rect x="512.9" y="225.500" width="2.600" height="2.600" rx=".5" fill="#2390ae"/><rect x="522.9" y="225.500" width="2.600" height="2.600" rx=".5" fill="#2390ae"/><rect x="532.9" y="225.500" width="2.600" height="2.600" rx=".5" fill="#2390ae"/><rect x="542.9" y="225.500" width="2.600" height="2.600" rx=".5" fill="#2390ae"/><rect x="552.9" y="225.500" width="2.600" height="2.600" rx=".5" fill="#2390ae"/><rect x="562.9" y="225.500" width="2.600" height="2.600" rx=".5" fill="#2390ae"/><rect x="572.9" y="225.500" width="2.600" height="2.600" rx=".5" fill="#2390ae"/><rect x="582.9" y="225.500" width="2.600" height="2.600" rx=".5" fill="#2390ae"/><rect x="592.9" y="225.500" width="2.600" height="2.600" rx=".5" fill="#2390ae"/><rect x="612.9" y="225.500" width="2.600" height="2.600" rx=".5" fill="#2390ae"/><rect x="622.9" y="225.500" width="2.600" height="2.600" rx=".5" fill="#2390ae"/><rect x="632.9" y="225.500" width="2.600" height="2.600" rx=".5" fill="#2390ae"/><rect x="642.9" y="225.500" width="2.600" height="2.600" rx=".5" fill="#2390ae"/><rect x="652.9" y="225.500" width="2.600" height="2.600" rx=".5" fill="#2390ae"/><rect x="662.9" y="225.500" width="2.600" height="2.600" rx=".5" fill="#2390ae"/><rect x="672.9" y="225.500" width="2.600" height="2.600" rx=".5" fill="#2390ae"/><rect x="682.9" y="225.500" width="2.600" height="2.600" rx=".5" fill="#2390ae"/><rect x="692.9" y="225.500" width="2.600" height="2.600" rx=".5" fill="#2390ae"/><rect x="702.9" y="225.500" width="2.600" height="2.600" rx=".5" fill="#2390ae"/><rect x="712.9" y="225.500" width="2.600" height="2.600" rx=".5" fill="#2390ae"/><rect x="722.9" y="225.500" width="2.600" height="2.600" rx=".5" fill="#2390ae"/><rect x="732.9" y="225.500" width="2.600" height="2.600" rx=".5" fill="#2390ae"/><rect x="742.9" y="225.500" width="2.600" height="2.600" rx=".5" fill="#2390ae"/><rect x="752.9" y="225.500" width="2.600" height="2.600" rx=".5" fill="#2390ae"/><rect x="762.9" y="225.500" width="2.600" height="2.600" rx=".5" fill="#2390ae"/><rect x="772.9" y="225.500" width="2.600" height="2.600" rx=".5" fill="#2390ae"/><rect x="782.9" y="225.500" width="2.600" height="2.600" rx=".5" fill="#2390ae"/><rect x="792.9" y="225.500" width="2.600" height="2.600" rx=".5" fill="#2390ae"/><rect x="802.9" y="225.500" width="2.600" height="2.600" rx=".5" fill="#2390ae"/><rect x="812.9" y="225.500" width="2.600" height="2.600" rx=".5" fill="#2390ae"/><rect x="822.9" y="225.500" width="2.600" height="2.600" rx=".5" fill="#2390ae"/><rect x="832.9" y="225.500" width="2.600" height="2.600" rx=".5" fill="#2390ae"/><rect x="842.9" y="225.500" width="2.600" height="2.600" rx=".5" fill="#2390ae"/><rect x="852.9" y="225.500" width="2.600" height="2.600" rx=".5" fill="#2390ae"/><rect x="862.9" y="225.500" width="2.600" height="2.600" rx=".5" fill="#2390ae"/><rect x="872.9" y="225.500" width="2.600" height="2.600" rx=".5" fill="#2390ae"/><rect x="882.9" y="225.500" width="2.600" height="2.600" rx=".5" fill="#2390ae"/><rect x="892.9" y="225.500" width="2.600" height="2.600" rx=".5" fill="#2390ae"/><rect x="902.9" y="225.500" width="2.600" height="2.600" rx=".5" fill="#2390ae"/><rect x="912.9" y="225.500" width="2.600" height="2.600" rx=".5" fill="#2390ae"/><rect x="922.9" y="225.500" width="2.600" height="2.600" rx=".5" fill="#2390ae"/><rect x="932.9" y="225.500" width="2.600" height="2.600" rx=".5" fill="#2390ae"/><rect x="942.9" y="225.500" width="2.600" height="2.600" rx=".5" fill="#2390ae"/><rect x="952.9" y="225.500" width="2.600" height="2.600" rx=".5" fill="#2390ae"/><rect x="962.9" y="225.500" width="2.600" height="2.600" rx=".5" fill="#2390ae"/><rect x="972.9" y="225.500" width="2.600" height="2.600" rx=".5" fill="#2390ae"/><rect x="982.9" y="225.500" width="2.600" height="2.600" rx=".5" fill="#2390ae"/><rect x="992.9" y="225.500" width="2.600" height="2.600" rx=".5" fill="#2390ae"/><rect x="1002.9" y="225.500" width="2.600" height="2.600" rx=".5" fill="#2390ae"/><rect x="1012.9" y="225.500" width="2.600" height="2.600" rx=".5" fill="#2390ae"/><rect x="1022.9" y="225.500" width="2.600" height="2.600" rx=".5" fill="#2390ae"/><rect x="1032.9" y="225.500" width="2.600" height="2.600" rx=".5" fill="#2390ae"/><rect x="1042.9" y="225.500" width="2.600" height="2.600" rx=".5" fill="#2390ae"/><rect x="1052.9" y="225.500" width="2.600" height="2.600" rx=".5" fill="#2390ae"/><rect x="1062.9" y="225.500" width="2.600" height="2.600" rx=".5" fill="#2390ae"/><rect x="1072.9" y="225.500" width="2.600" height="2.600" rx=".5" fill="#2390ae"/><rect x="1082.9" y="225.500" width="2.600" height="2.600" rx=".5" fill="#2390ae"/><rect x="1092.9" y="225.500" width="2.600" height="2.600" rx=".5" fill="#2390ae"/><rect x="1102.9" y="225.500" width="2.600" height="2.600" rx=".5" fill="#2390ae"/><rect x="1112.9" y="225.500" width="2.600" height="2.600" rx=".5" fill="#2390ae"/><rect x="1122.9" y="225.500" width="2.600" height="2.600" rx=".5" fill="#2390ae"/><rect x="1132.9" y="225.500" width="2.600" height="2.600" rx=".5" fill="#2390ae"/><rect x="1142.9" y="225.500" width="2.600" height="2.600" rx=".5" fill="#2390ae"/><rect x="1152.9" y="225.500" width="2.600" height="2.600" rx=".5" fill="#2390ae"/><rect x="1162.9" y="225.500" width="2.600" height="2.600" rx=".5" fill="#2390ae"/><rect x="1172.9" y="225.500" width="2.600" height="2.600" rx=".5" fill="#2390ae"/><rect x="1182.9" y="225.500" width="2.600" height="2.600" rx=".5" fill="#2390ae"/><rect x="1192.9" y="225.500" width="2.600" height="2.600" rx=".5" fill="#2390ae"/><rect x="1202.9" y="225.500" width="2.600" height="2.600" rx=".5" fill="#2390ae"/><rect x="1212.9" y="225.500" width="2.600" height="2.600" rx=".5" fill="#2390ae"/><rect x="1222.9" y="225.500" width="2.600" height="2.600" rx=".5" fill="#2390ae"/><rect x="1232.9" y="225.500" width="2.600" height="2.600" rx=".5" fill="#2390ae"/><rect x="1242.9" y="225.500" width="2.600" height="2.600" rx=".5" fill="#2390ae"/><rect x="1252.9" y="225.500" width="2.600" height="2.600" rx=".5" fill="#2390ae"/><rect x="1262.9" y="225.500" width="2.600" height="2.600" rx=".5" fill="#2390ae"/><rect x="1272.9" y="225.500" width="2.600" height="2.600" rx=".5" fill="#2390ae"/><rect x="1282.9" y="225.500" width="2.600" height="2.600" rx=".5" fill="#2390ae"/><rect x="1292.9" y="225.500" width="2.600" height="2.600" rx=".5" fill="#2390ae"/><rect x="1302.9" y="225.500" width="2.600" height="2.600" rx=".5" fill="#2390ae"/><rect x="1312.9" y="225.500" width="2.600" height="2.600" rx=".5" fill="#2390ae"/><rect x="1322.9" y="225.500" width="2.600" height="2.600" rx=".5" fill="#2390ae"/><rect x="1332.9" y="225.500" width="2.600" height="2.600" rx=".5" fill="#2390ae"/><rect x="1342.9" y="225.500" width="2.600" height="2.600" rx=".5" fill="#2390ae"/><rect x="1352.9" y="225.500" width="2.600" height="2.600" rx=".5" fill="#2390ae"/><rect x="1362.9" y="225.500" width="2.600" height="2.600" rx=".5" fill="#2390ae"/><rect x="1372.9" y="225.500" width="2.600" height="2.600" rx=".5" fill="#2390ae"/><rect x="1382.9" y="225.500" width="2.600" height="2.600" rx=".5" fill="#2390ae"/><rect x="1392.9" y="225.500" width="2.600" height="2.600" rx=".5" fill="#2390ae"/><rect x="1402.9" y="225.500" width="2.600" height="2.600" rx=".5" fill="#2390ae"/><rect x="1412.9" y="225.500" width="2.600" height="2.600" rx=".5" fill="#2390ae"/><rect x="1422.9" y="225.500" width="2.600" height="2.600" rx=".5" fill="#2390ae"/><rect x="1432.9" y="225.500" width="2.600" height="2.600" rx=".5" fill="#2390ae"/><rect x="1442.9" y="225.500" width="2.600" height="2.600" rx=".5" fill="#2390ae"/><path d="M1428.500 252.500h12.500M1434.800 245.500v5M1434.800 259.800v-5" stroke="#222" stroke-width="1.200" fill="none"/><path d="M1432 248.200l2.800-3.200 2.800 3.200zM1432 257.200l2.800 3.200 2.800-3.200z" fill="#222"/><rect x="1428.500" y="250.300" width="12.500" height="0.900" fill="#222"/><path d="M1430.500 277l4.500-4.800 4.500 4.800" fill="none" stroke="#555" stroke-width="1.800"/><rect x="1469.5" y="174.8" width="22" height="19" fill="#fff" stroke="#8d9196" stroke-width="1"/><rect x="1469.5" y="174.8" width="22" height="3.6" fill="#2f62a8"/><circle cx="1474" cy="181.8" r="1.300" fill="none" stroke="#555" stroke-width=".8"/><rect x="1477" y="181.20000000000002" width="11.500" height="1.200" fill="#777"/><circle cx="1474" cy="185.8" r="1.300" fill="none" stroke="#555" stroke-width=".8"/><rect x="1477" y="185.20000000000002" width="11.500" height="1.200" fill="#777"/><circle cx="1474" cy="189.8" r="1.300" fill="none" stroke="#555" stroke-width=".8"/><rect x="1477" y="189.20000000000002" width="11.500" height="1.200" fill="#777"/><rect x="1507.4" y="174.8" width="21.5" height="18.5" fill="#fff" stroke="#c5c8cc" stroke-width="1"/><rect x="1507.4" y="174.8" width="21.5" height="3.6" fill="#4a7fc0"/><rect x="1520" y="186.800" width="10.300" height="10" rx="1" fill="#e2472e"/><path d="M1522.600 189.300l5.200 5M1527.800 189.300l-5.200 5" stroke="#fff" stroke-width="1.800"/><rect x="1544.5" y="186.800" width="22.500" height="8.600" fill="#e9e9e9" stroke="#7a7a7a" stroke-width="1"/><rect x="1547.7" y="187.600" width="1" height="7" fill="#8c8c8c"/><rect x="1551.4" y="187.600" width="1" height="7" fill="#8c8c8c"/><rect x="1555.1" y="187.600" width="1" height="7" fill="#8c8c8c"/><rect x="1558.8" y="187.600" width="1" height="7" fill="#8c8c8c"/><rect x="1562.5" y="187.600" width="1" height="7" fill="#8c8c8c"/><rect x="1544.5" y="190.600" width="22.500" height="1" fill="#8c8c8c"/><path d="M1548.4 173.800h2.600v5.700h2.900l-4.200 5.300-4.200-5.300h2.900z" fill="#2f62a8"/><path d="M1560.5 173.800h2.600v5.700h2.900l-4.200 5.300-4.200-5.300h2.900z" fill="#2f62a8"/><rect x="1582" y="186.800" width="22.500" height="8.600" fill="#e9e9e9" stroke="#7a7a7a" stroke-width="1"/><rect x="1585.2" y="187.600" width="1" height="7" fill="#8c8c8c"/><rect x="1588.9" y="187.600" width="1" height="7" fill="#8c8c8c"/><rect x="1592.6" y="187.600" width="1" height="7" fill="#8c8c8c"/><rect x="1596.3" y="187.600" width="1" height="7" fill="#8c8c8c"/><rect x="1600.0" y="187.600" width="1" height="7" fill="#8c8c8c"/><rect x="1582" y="190.600" width="22.500" height="1" fill="#8c8c8c"/><path d="M1585.9 173.800h2.600v5.700h2.900l-4.200 5.300-4.200-5.300h2.900z" fill="#2f62a8"/><path d="M1598.0 173.800h2.600v5.700h2.900l-4.200 5.300-4.200-5.300h2.900z" fill="#2f62a8"/><rect x="1618.5" y="174.8" width="22" height="18.5" fill="#fff" stroke="#8d9196" stroke-width="1"/><rect x="1618.5" y="174.8" width="22" height="3.6" fill="#2f62a8"/><path transform="translate(1629.5,186.2) scale(1.02)" d="M0 5.500L2 3.800L4.500 6.500L10.500 0L12 1.500L4.700 10z" fill="#2f8f6b"/><path d="M1660.38 182.84A8.3 8.3 0 0 1 1676.40 181.16" fill="none" stroke="#3cc546" stroke-width="2.9"/><path d="M1676.82 185.16A8.3 8.3 0 0 1 1660.80 186.84" fill="none" stroke="#3cc546" stroke-width="2.9"/><path d="M1672.00 180.40L1680.80 180.40L1676.70 187.00z" fill="#3cc546"/><path d="M1656.40 187.60L1665.20 187.60L1660.50 181.00z" fill="#3cc546"/><rect x="1693.2" y="172.600" width="24.500" height="23.600" fill="#fff" stroke="#8d9196" stroke-width="1.200"/><rect x="1692.6000000000001" y="172" width="25.700" height="2.400" fill="#3b78c4"/><rect x="1701.9" y="174.400" width="1.600" height="21.500" fill="#a9adb2"/><rect x="1705.7" y="177.200" width="11" height="9" fill="#e4e4e4" stroke="#9a9a9a" stroke-width="1"/><rect x="1708.2" y="180" width="6" height="1" fill="#bbb"/><rect x="1708.2" y="182.700" width="6" height="1" fill="#bbb"/><path d="M1695.7 181.500h5.500M1699.0 179.300l2.200 2.200-2.200 2.200" fill="none" stroke="#4b8edb" stroke-width="1.100"/><rect x="1730.7" y="172.600" width="24.500" height="23.600" fill="#fff" stroke="#8d9196" stroke-width="1.200"/><rect x="1730.1000000000001" y="172" width="25.700" height="2.400" fill="#3b78c4"/><rect x="1740.0" y="174.400" width="1.600" height="21.500" fill="#a9adb2"/><rect x="1743.8" y="177.200" width="11" height="9" fill="#e4e4e4" stroke="#9a9a9a" stroke-width="1"/><rect x="1746.3" y="180" width="6" height="1" fill="#bbb"/><rect x="1746.3" y="182.700" width="6" height="1" fill="#bbb"/><path d="M1732.7 181.500h7M1734.7 179.500l-2 2 2 2M1737.7 179.500l2 2-2 2" fill="none" stroke="#4b8edb" stroke-width="1"/><rect x="1764.3" y="169.6" width="1" height="27.099999999999994" fill="#d2d7dd"/><rect x="1779" y="175" width="21" height="19" fill="#fff" stroke="#d2d2d2" stroke-width="1.600"/><rect x="1779" y="175" width="21" height="6" fill="#e6e6e6"/><rect x="1782" y="184" width="15" height="7" fill="#fff" stroke="#dadada" stroke-width="1.200"/><circle cx="1779.500" cy="174.500" r="3.400" fill="#cdcdcd"/><path d="M1815 194.600L1821.300 173.300L1827.500 192L1835.800 180.800" fill="none" stroke="#7b7b7b" stroke-width="1.100"/><path d="M1815 181.200L1821.300 192.500L1828.800 176.700L1835.800 193.300" fill="none" stroke="#3f86d6" stroke-width="1.100"/><circle cx="1821.3" cy="173.3" r="2" fill="#6f6f6f"/><circle cx="1835.8" cy="180.8" r="2" fill="#6f6f6f"/><circle cx="1827.5" cy="192" r="2" fill="#6f6f6f"/><circle cx="1815" cy="194.6" r="2" fill="#6f6f6f"/><circle cx="1828.8" cy="176.7" r="2.100" fill="#3f86d6"/><circle cx="1815" cy="181.2" r="2.100" fill="#3f86d6"/><circle cx="1821.3" cy="192.5" r="2.100" fill="#3f86d6"/><circle cx="1835.8" cy="193.3" r="2.100" fill="#3f86d6"/><path d="M1851 176Q1851 172 1855 172L1866 172L1866 193L1851 193z" fill="#3d87d3"/><path d="M1854.500 178.500L1858.500 174L1869.500 174Q1871 174 1871 175.500L1871 195Q1871 196.500 1869.500 196.500L1856 196.500Q1854.500 196.500 1854.500 195z" fill="#ece9f2" stroke="#b7acc9" stroke-width="1"/><rect x="1857.500" y="178.5" width="11" height="1.100" fill="#a99fbd"/><rect x="1857.500" y="180.9" width="11" height="1.100" fill="#a99fbd"/><rect x="1857.500" y="183.3" width="11" height="1.100" fill="#a99fbd"/><rect x="1857.500" y="185.7" width="11" height="1.100" fill="#a99fbd"/><rect x="1857.500" y="188.1" width="11" height="1.100" fill="#a99fbd"/><rect x="1857.500" y="190.5" width="11" height="1.100" fill="#a99fbd"/><rect x="1857.500" y="192.9" width="11" height="1.100" fill="#a99fbd"/><path d="M1866.500 192.500L1872.500 186.500L1874.500 188.500L1868.500 194.500L1866 195z" fill="#e6e0ef" stroke="#a89cc0" stroke-width=".8"/><path d="M1872.500 186.500l1.300-1.300 2 2-1.300 1.300z" fill="#3d87d3"/><path d="M1883.75 183h7.3l-3.65 4z" fill="#111"/><circle cx="1471.500" cy="232.700" r="7.300" fill="#fcfcfc" stroke="#e2e2e2" stroke-width="2"/><path d="M1477 238.500L1486 246.500" stroke="#e0e0e0" stroke-width="3.200" stroke-linecap="round"/><path d="M1464 272.500l4.800 5 4.800-5" fill="none" stroke="#444" stroke-width="1.900"/><rect x="1485" y="268" width="16" height="13.500" fill="#fff" stroke="#7d8690" stroke-width="1.100"/><rect x="1484.500" y="267" width="17" height="3.300" fill="#2b8de0"/><rect x="1494" y="277" width="9" height="7" fill="#fff"/><path d="M1502.500 280.500h-6.500M1498.800 277.700l-2.900 2.800 2.900 2.800" fill="none" stroke="#2f6fd0" stroke-width="1.400"/><g transform="translate(-1.600,0)"><path d="M1511 293.500h9.500l4 4v13h-13.500z" fill="#fafafa" stroke="#9a9a9a" stroke-width="1"/><path d="M1520.500 293.500v4h4" fill="none" stroke="#9a9a9a" stroke-width="1"/><rect x="1513.500" y="297.500" width="2.600" height="4" fill="#5fa56a"/><rect x="1513.500" y="302" width="1.600" height="3" fill="#999"/><rect x="1519.500" y="305.500" width="2.800" height="2.800" fill="#e03030"/><rect x="1517" y="299.500" width="3" height="1" fill="#bbb"/></g><rect x="101.900" y="656.800" width="1749" height="6.300" fill="url(#dots)"/><path d="M1860.75 659.3h9.5l-4.75 5z" fill="#f2f6fa"/><path d="M1878 658.800h4M1881.800 654.500v8.500M1882 656.500h6.500v4.300h-6.500M1882 661.600h6.500" fill="none" stroke="#f2f6fa" stroke-width="1.200"/><path d="M1896.5 654.5L1905.5 663.5M1905.5 654.5L1896.5 663.5" stroke="#f5f8fb" stroke-width="2.3" fill="none"/><path d="M1870 696l-5.500 5.500 5.500 5.500z" fill="none" stroke="#222" stroke-width="1.100"/><path d="M1881.500 696l5.500 5.500-5.500 5.500z" fill="none" stroke="#222" stroke-width="1.100"/><path d="M1897.8 697.2L1907 706.2M1907 697.2L1897.8 706.2" stroke="#111" stroke-width="2.6" fill="none"/><defs><linearGradient id="gsq" x1="0" y1="0" x2="1" y2="1"><stop offset="0" stop-color="#dcdcdc"/><stop offset="1" stop-color="#aeaeae"/></linearGradient><pattern id="dots" width="5" height="5" patternUnits="userSpaceOnUse" patternTransform="translate(101.900,656.800)"><rect x="0" y="0" width="2.100" height="1.300" fill="#dbe5f0"/><rect x="2.900" y="2.200" width="1.300" height="1.900" fill="#d3dfed"/><rect x="2.500" y="0" width="2" height="1.300" fill="#467cb4"/><rect x="0.300" y="2.200" width="1.600" height="1.900" fill="#467cb4"/></pattern></defs><rect x="26.300" y="742" width="12.500" height="12" rx="1" fill="url(#gsq)"/><rect x="51.1" y="733" width="1" height="29.5" fill="#d2d7dd"/><rect x="248.9" y="733" width="1" height="29.5" fill="#d2d7dd"/><rect x="451.3" y="733" width="1" height="29.5" fill="#d2d7dd"/><rect x="638.8" y="733" width="1" height="29.5" fill="#d2d7dd"/><circle cx="72.5" cy="748" r="10" fill="#1e96e8"/><path d="M78.0 748h-10M71.7 743.2l-4.8 4.800l4.8 4.800" fill="none" stroke="#fff" stroke-width="2.500"/><circle cx="165" cy="748" r="10" fill="#1e96e8"/><path d="M159.5 748h10M165.8 743.2l4.8 4.800l-4.8 4.800" fill="none" stroke="#fff" stroke-width="2.500"/><rect x="95.800" y="738.800" width="18.500" height="13.500" fill="#fff" stroke="#8c8c8c" stroke-width="1.300"/><rect x="98.500" y="741.5" width="6" height="1.300" fill="#aaa"/><rect x="98.500" y="745" width="4.5" height="1.300" fill="#aaa"/><rect x="98.500" y="747.8" width="12" height="1.300" fill="#777"/><rect x="98.500" y="750" width="9" height="1.300" fill="#bbb"/><rect x="106.500" y="750.500" width="3" height="7.300" fill="#d5d5d5" stroke="#a3a3a3" stroke-width=".9"/><rect x="111.300" y="750.500" width="3" height="7.300" fill="#d5d5d5" stroke="#a3a3a3" stroke-width=".9"/><g fill="none" stroke="#bdbdbd" stroke-width="2.600"><path d="M129.600 750.500A6 6 0 0 1 136.500 741.800"/><path d="M140.600 745.500A6 6 0 0 1 133.700 754.200"/></g><path d="M134.500 738l6 3.900-6 3.900z" fill="#bdbdbd"/><path d="M135.800 758l-6-3.900 6-3.900z" fill="#bdbdbd"/><path d="M197.500 739.500L207.300 756.500L187.700 756.500z" fill="#e4dc35" stroke="#d4cb2a" stroke-width="1" stroke-linejoin="round"/><path d="M197.500 741.500L204 753" stroke="#f3ee7a" stroke-width="1" fill="none"/><rect x="196.400" y="744.500" width="2.300" height="6.300" fill="#111"/><rect x="196.400" y="752" width="2.300" height="2.300" fill="#111"/><circle cx="230" cy="748" r="7.200" fill="none" stroke="#adadad" stroke-width="2"/><path d="M221.500 756L238.500 740" stroke="#adadad" stroke-width="2"/><g transform="translate(386.5,739) scale(0.92)" fill="#8e8e8e"><path d="M4.4 0.8h3.6v2.2h-3.6z M12.4 0.8h3.6v2.2h-3.6z"/><path d="M3.6 3h5.2l1 4.4h0.8l1-4.4h5.2l3.2 9.4v4.4q0 1-1 1h-5.6q-1 0-1-1v-6h-2.4v6q0 1-1 1h-5.600q-1 0-1-1v-4.4z"/></g><path d="M397 754.500h7v-2.700l5 4-5 4v-2.700h-7z" fill="#2f6fc0"/><circle cx="432.300" cy="748" r="8.700" fill="#b9b9b9"/><path d="M428.500 744.200l7.600 7.600M436.100 744.200l-7.600 7.600" stroke="#fff" stroke-width="2.300"/><path d="M413 782l6.500 6-6.500 6z" fill="#222"/><path d="M22.5 974.5L17.5 979L22.5 983.5" fill="none" stroke="#444" stroke-width="2"/><path d="M389.5 974.5L394.5 979L389.5 983.5" fill="none" stroke="#444" stroke-width="2"/><path d="M419.5 974.5L414.5 979L419.5 983.5" fill="none" stroke="#444" stroke-width="2"/><path d="M1896.5 974.5L1901.5 979L1896.5 983.5" fill="none" stroke="#444" stroke-width="2"/></svg>
<span style="left:27.3px;top:7.20px;font-size:15px;color:#000;font-family:'Liberation Sans',sans-serif;letter-spacing:-0.025px;">ReportMiner - Enterprise Edition</span>
<span style="left:12.6px;top:35.35px;font-size:15.3px;color:#111;font-family:'Liberation Sans',sans-serif;letter-spacing:-0.424px;"><u>F</u>ile</span>
<span style="left:55.300000000000004px;top:35.35px;font-size:15.3px;color:#111;font-family:'Liberation Sans',sans-serif;letter-spacing:-0.420px;"><u>E</u>dit</span>
<span style="left:100.3px;top:35.35px;font-size:15.3px;color:#111;font-family:'Liberation Sans',sans-serif;letter-spacing:-0.430px;"><u>V</u>iew</span>
<span style="left:151.7px;top:35.35px;font-size:15.3px;color:#111;font-family:'Liberation Sans',sans-serif;letter-spacing:-0.973px;"><u>S</u>erver</span>
<span style="left:211.7px;top:35.35px;font-size:15.3px;color:#111;font-family:'Liberation Sans',sans-serif;letter-spacing:-0.102px;">Vi<u>r</u>tualization</span>
<span style="left:317.7px;top:35.35px;font-size:15.3px;color:#111;font-family:'Liberation Sans',sans-serif;letter-spacing:-0.185px;"><u>P</u>roject</span>
<span style="left:383.9px;top:35.35px;font-size:15.3px;color:#111;font-family:'Liberation Sans',sans-serif;letter-spacing:-0.181px;"><u>G</u>it</span>
<span style="left:422.8px;top:35.35px;font-size:15.3px;color:#111;font-family:'Liberation Sans',sans-serif;letter-spacing:-0.455px;"><u>T</u>ools</span>
<span style="left:476.4px;top:35.35px;font-size:15.3px;color:#111;font-family:'Liberation Sans',sans-serif;letter-spacing:0.176px;"><u>W</u>indow</span>
<span style="left:551.6px;top:35.35px;font-size:15.3px;color:#111;font-family:'Liberation Sans',sans-serif;letter-spacing:-0.654px;"><u>S</u>ocial</span>
<span style="left:610.7px;top:35.35px;font-size:15.3px;color:#111;font-family:'Liberation Sans',sans-serif;letter-spacing:-0.317px;">Dev Mode</span>
<span style="left:698.2px;top:35.35px;font-size:15.3px;color:#111;font-family:'Liberation Sans',sans-serif;letter-spacing:-0.228px;"><u>H</u>elp</span>
<span style="left:1678px;top:76.70px;font-size:14.6px;color:#111;font-family:'Liberation Sans',sans-serif;letter-spacing:0.562px;">admin</span>
<span style="left:1758px;top:76.70px;font-size:14.6px;color:#111;font-family:'Liberation Sans',sans-serif;letter-spacing:-0.109px;">Server Connected</span>
<span style="left:10.6px;top:130.70px;font-size:14.6px;color:#444b55;font-family:'Liberation Sans',sans-serif;letter-spacing:-0.145px;">Report Browser</span>
<span style="left:19px;top:172.00px;font-size:14.6px;color:#151515;font-family:'Liberation Sans',sans-serif;letter-spacing:-0.072px;">Data Export Settings</span>
<span style="left:335.5px;top:129.20px;font-size:14.6px;color:#333a44;font-family:'Liberation Sans',sans-serif;letter-spacing:0.130px;">ReportModel2.Rmd</span>
<span style="left:1459px;top:130.70px;font-size:14.6px;color:#444b55;font-family:'Liberation Sans',sans-serif;letter-spacing:0.011px;">Project Explorer</span>
<span style="left:1497px;top:229.70px;font-size:14.6px;color:#9a9a9a;font-family:'Liberation Sans',sans-serif;letter-spacing:-0.488px;">Search...</span>
<span style="left:1509px;top:266.70px;font-size:14.6px;color:#111;font-family:'Liberation Sans',sans-serif;letter-spacing:0.227px;">Project.cprj</span>
<span style="left:1533px;top:294.20px;font-size:14.6px;color:#111;font-family:'Liberation Sans',sans-serif;letter-spacing:0.130px;">ReportModel2.Rmd</span>
<span style="left:60.5px;top:265.50px;font-size:15.4px;color:#fff;font-family:'Liberation Sans',sans-serif;letter-spacing:-0.032px;">OrderItems_Export</span>
<span style="left:60.5px;top:302.80px;font-size:15.4px;color:#222;font-family:'Liberation Sans',sans-serif;letter-spacing:-0.078px;">Order_2</span>
<span style="left:60.5px;top:340.30px;font-size:15.4px;color:#222;font-family:'Liberation Sans',sans-serif;letter-spacing:-0.245px;">Order_1</span>
<span style="left:60.5px;top:377.60px;font-size:15.4px;color:#222;font-family:'Liberation Sans',sans-serif;letter-spacing:0.026px;">Order_Details_Export</span>
<span style="left:385.0px;top:253.50px;font-size:15.4px;color:#2c3e58;font-family:'Liberation Mono',monospace;letter-spacing:0.76px;-webkit-text-stroke:0.2px #2c3e58;">1</span>
<span style="left:408.4px;top:253.50px;font-size:15.4px;color:#2e2e2e;font-family:'Liberation Mono',monospace;letter-spacing:0.76px;">02/01/09</span>
<span style="left:748.4px;top:253.50px;font-size:15.4px;color:#2e2e2e;font-family:'Liberation Mono',monospace;letter-spacing:0.76px;">NEW FURTINURE MART</span>
<span style="left:1248.4px;top:253.50px;font-size:15.4px;color:#2e2e2e;font-family:'Liberation Mono',monospace;letter-spacing:0.76px;">PAGE 01</span>
<span style="left:385.0px;top:287.28px;font-size:15.4px;color:#2c3e58;font-family:'Liberation Mono',monospace;letter-spacing:0.76px;-webkit-text-stroke:0.2px #2c3e58;">2</span>
<span style="left:408.4px;top:287.28px;font-size:15.4px;color:#2e2e2e;font-family:'Liberation Mono',monospace;letter-spacing:0.76px;">00:00:00</span>
<span style="left:768.4px;top:287.28px;font-size:15.4px;color:#2e2e2e;font-family:'Liberation Mono',monospace;letter-spacing:0.76px;">ORDERS REPORT</span>
<span style="left:385.0px;top:321.06px;font-size:15.4px;color:#2c3e58;font-family:'Liberation Mono',monospace;letter-spacing:0.76px;-webkit-text-stroke:0.2px #2c3e58;">3</span>
<span style="left:728.4px;top:321.06px;font-size:15.4px;color:#2e2e2e;font-family:'Liberation Mono',monospace;letter-spacing:0.76px;">FROM 01/01/09 TO 01/31/09</span>
<span style="left:385.0px;top:354.84px;font-size:15.4px;color:#2c3e58;font-family:'Liberation Mono',monospace;letter-spacing:0.76px;-webkit-text-stroke:0.2px #2c3e58;">4</span>
<span style="left:385.0px;top:388.62px;font-size:15.4px;color:#2c3e58;font-family:'Liberation Mono',monospace;letter-spacing:0.76px;-webkit-text-stroke:0.2px #2c3e58;">5</span>
<span style="left:698.4px;top:388.62px;font-size:15.4px;color:#2e2e2e;font-family:'Liberation Mono',monospace;letter-spacing:0.76px;">ACCOUNT: NORTH RIDGE FURNITURES</span>
<span style="left:385.0px;top:422.40px;font-size:15.4px;color:#2c3e58;font-family:'Liberation Mono',monospace;letter-spacing:0.76px;-webkit-text-stroke:0.2px #2c3e58;">6</span>
<span style="left:698.4px;top:422.40px;font-size:15.4px;color:#2e2e2e;font-family:'Liberation Mono',monospace;letter-spacing:0.76px;">ACCOUNT ID: 123456</span>
<span style="left:385.0px;top:456.18px;font-size:15.4px;color:#2c3e58;font-family:'Liberation Mono',monospace;letter-spacing:0.76px;-webkit-text-stroke:0.2px #2c3e58;">7</span>
<span style="left:698.4px;top:456.18px;font-size:15.4px;color:#2e2e2e;font-family:'Liberation Mono',monospace;letter-spacing:0.76px;">CONTACT PERSON: John Doe</span>
<span style="left:385.0px;top:489.96px;font-size:15.4px;color:#2c3e58;font-family:'Liberation Mono',monospace;letter-spacing:0.76px;-webkit-text-stroke:0.2px #2c3e58;">8</span>
<span style="left:385.0px;top:523.74px;font-size:15.4px;color:#2c3e58;font-family:'Liberation Mono',monospace;letter-spacing:0.76px;-webkit-text-stroke:0.2px #2c3e58;">9</span>
<span style="left:375.0px;top:557.52px;font-size:15.4px;color:#2c3e58;font-family:'Liberation Mono',monospace;letter-spacing:0.76px;-webkit-text-stroke:0.2px #2c3e58;">10</span>
<span style="left:408.4px;top:557.52px;font-size:15.4px;color:#2e2e2e;font-family:'Liberation Mono',monospace;letter-spacing:0.76px;">ITEM</span>
<span style="left:528.4px;top:557.52px;font-size:15.4px;color:#2e2e2e;font-family:'Liberation Mono',monospace;letter-spacing:0.76px;">QUANTITY</span>
<span style="left:628.4px;top:557.52px;font-size:15.4px;color:#2e2e2e;font-family:'Liberation Mono',monospace;letter-spacing:0.76px;">DESCRIPTION</span>
<span style="left:1038.4px;top:557.52px;font-size:15.4px;color:#2e2e2e;font-family:'Liberation Mono',monospace;letter-spacing:0.76px;">ITEM-CODE</span>
<span style="left:1188.4px;top:557.52px;font-size:15.4px;color:#2e2e2e;font-family:'Liberation Mono',monospace;letter-spacing:0.76px;">PRICE</span>
<span style="left:1278.4px;top:557.52px;font-size:15.4px;color:#2e2e2e;font-family:'Liberation Mono',monospace;letter-spacing:0.76px;">TOTAL</span>
<span style="left:375.0px;top:591.30px;font-size:15.4px;color:#2c3e58;font-family:'Liberation Mono',monospace;letter-spacing:0.76px;-webkit-text-stroke:0.2px #2c3e58;">11</span>
<span style="left:375.0px;top:625.08px;font-size:15.4px;color:#2c3e58;font-family:'Liberation Mono',monospace;letter-spacing:0.76px;-webkit-text-stroke:0.2px #2c3e58;clip-path:inset(0 0 7.5px 0);">12</span>
<span style="left:548.4px;top:625.08px;font-size:15.4px;color:#2e2e2e;font-family:'Liberation Mono',monospace;letter-spacing:0.76px;clip-path:inset(0 0 7.5px 0);">ORDER ID:</span>
<span style="left:658.4px;top:625.08px;font-size:15.4px;color:#2e2e2e;font-family:'Liberation Mono',monospace;letter-spacing:0.76px;clip-path:inset(0 0 7.5px 0);">M09090</span>
<span style="left:599px;top:219.50px;font-size:15px;color:#333;font-family:'Liberation Serif',serif;font-weight:bold;">Ñ</span>
<span style="left:12.8px;top:652.00px;font-size:14.6px;color:#fff;font-family:'Liberation Sans',sans-serif;letter-spacing:-0.317px;">Job Progress</span>
<span style="left:25.8px;top:695.90px;font-size:14.6px;color:#fff;font-family:'Liberation Sans',sans-serif;letter-spacing:-0.023px;">11 - ReportModel_SampleOrders.Rmd</span>
<span style="left:460.3px;top:740.70px;font-size:14.6px;color:#111;font-family:'Liberation Sans',sans-serif;letter-spacing:-0.243px;">Job Duration: 00:00:00.481</span>
<span style="left:648px;top:740.70px;font-size:14.6px;color:#111;font-family:'Liberation Sans',sans-serif;letter-spacing:0.047px;">Job Completed Successfully</span>
<span style="left:21px;top:777.95px;font-size:14.7px;color:#111;font-family:'Liberation Sans',sans-serif;letter-spacing:-0.871px;">Task Name</span>
<span style="left:145px;top:777.95px;font-size:14.7px;color:#111;font-family:'Liberation Sans',sans-serif;letter-spacing:-1.043px;">Input</span>
<span style="left:231.5px;top:777.95px;font-size:14.7px;color:#111;font-family:'Liberation Sans',sans-serif;letter-spacing:-0.919px;">Output</span>
<span style="left:320px;top:777.95px;font-size:14.7px;color:#111;font-family:'Liberation Sans',sans-serif;letter-spacing:-1.397px;">Errors</span>
<span style="left:15px;top:803.95px;font-size:14.7px;color:#fff;font-family:'Liberation Sans',sans-serif;letter-spacing:-0.717px;">ReportModel_Sa...</span>
<span style="left:202.3px;top:803.95px;font-size:14.7px;color:#1a1aff;font-family:'Liberation Sans',sans-serif;letter-spacing:0.350px;">11</span>
<span style="left:290.79999999999995px;top:803.95px;font-size:14.7px;color:#1f9a1f;font-family:'Liberation Sans',sans-serif;letter-spacing:0.350px;">11</span>
<span style="left:385.09999999999997px;top:803.95px;font-size:14.7px;color:#ff2020;font-family:'Liberation Sans',sans-serif;letter-spacing:-0.372px;">0</span>
<span style="left:15px;top:831.55px;font-size:14.7px;color:#111;font-family:'Liberation Sans',sans-serif;letter-spacing:-1.068px;">Dest</span>
<span style="left:209.1px;top:831.55px;font-size:14.7px;color:#1a1aff;font-family:'Liberation Sans',sans-serif;letter-spacing:-0.372px;">4</span>
<span style="left:297.59999999999997px;top:831.55px;font-size:14.7px;color:#1f9a1f;font-family:'Liberation Sans',sans-serif;letter-spacing:-0.372px;">4</span>
<span style="left:385.09999999999997px;top:831.55px;font-size:14.7px;color:#ff2020;font-family:'Liberation Sans',sans-serif;letter-spacing:-0.372px;">0</span>
<span style="left:15px;top:859.15px;font-size:14.7px;color:#111;font-family:'Liberation Sans',sans-serif;letter-spacing:-1.028px;">Filter</span>
<span style="left:202.3px;top:859.15px;font-size:14.7px;color:#1a1aff;font-family:'Liberation Sans',sans-serif;letter-spacing:0.350px;">11</span>
<span style="left:297.59999999999997px;top:859.15px;font-size:14.7px;color:#1f9a1f;font-family:'Liberation Sans',sans-serif;letter-spacing:-0.372px;">4</span>
<span style="left:385.09999999999997px;top:859.15px;font-size:14.7px;color:#ff2020;font-family:'Liberation Sans',sans-serif;letter-spacing:-0.372px;">0</span>
<span style="left:15px;top:886.75px;font-size:14.7px;color:#111;font-family:'Liberation Sans',sans-serif;letter-spacing:-1.258px;">Log</span>
<span style="left:209.1px;top:886.75px;font-size:14.7px;color:#1a1aff;font-family:'Liberation Sans',sans-serif;letter-spacing:-0.372px;">4</span>
<span style="left:297.59999999999997px;top:886.75px;font-size:14.7px;color:#1f9a1f;font-family:'Liberation Sans',sans-serif;letter-spacing:-0.372px;">4</span>
<span style="left:385.09999999999997px;top:886.75px;font-size:14.7px;color:#ff2020;font-family:'Liberation Sans',sans-serif;letter-spacing:-0.372px;">0</span>
<span style="left:15px;top:914.35px;font-size:14.7px;color:#111;font-family:'Liberation Sans',sans-serif;letter-spacing:-0.893px;">Variables</span>
<span style="left:209.1px;top:914.35px;font-size:14.7px;color:#1a1aff;font-family:'Liberation Sans',sans-serif;letter-spacing:-0.372px;">0</span>
<span style="left:297.59999999999997px;top:914.35px;font-size:14.7px;color:#1f9a1f;font-family:'Liberation Sans',sans-serif;letter-spacing:-0.372px;">0</span>
<span style="left:385.09999999999997px;top:914.35px;font-size:14.7px;color:#ff2020;font-family:'Liberation Sans',sans-serif;letter-spacing:-0.372px;">0</span>
<span style="left:472.5px;top:780.65px;font-size:14.7px;color:#fff;font-family:'Liberation Sans',sans-serif;letter-spacing:-1.844px;">54</span>
<span style="left:521.3px;top:780.65px;font-size:14.7px;color:#fff;font-family:'Liberation Sans',sans-serif;letter-spacing:-0.775px;">ASTWKS251:9260</span>
<span style="left:679.9px;top:780.65px;font-size:14.7px;color:#fff;font-family:'Liberation Sans',sans-serif;letter-spacing:0.350px;">11</span>
<span style="left:713.5px;top:780.65px;font-size:14.7px;color:#fff;font-family:'Liberation Sans',sans-serif;">:</span>
<span style="left:733.7px;top:780.65px;font-size:14.7px;color:#fff;font-family:'Liberation Sans',sans-serif;letter-spacing:-0.616px;">1/6/2021 7:56:00 PM: Job D:\RM_Training\RM_Training\MODULE_2\Exercise_1_CreatingDataRegions-Fields\ReportModel_SampleOrders.Rmd : OrderItems_Export queued. Job Id: 11.</span>
<span style="left:472.5px;top:808.15px;font-size:14.7px;color:#111;font-family:'Liberation Sans',sans-serif;letter-spacing:-1.844px;">55</span>
<span style="left:521.3px;top:808.15px;font-size:14.7px;color:#111;font-family:'Liberation Sans',sans-serif;letter-spacing:-0.775px;">ASTWKS251:9260</span>
<span style="left:679.9px;top:808.15px;font-size:14.7px;color:#111;font-family:'Liberation Sans',sans-serif;letter-spacing:0.350px;">11</span>
<span style="left:713.5px;top:808.15px;font-size:14.7px;color:#111;font-family:'Liberation Sans',sans-serif;">:</span>
<span style="left:733.7px;top:808.15px;font-size:14.7px;color:#111;font-family:'Liberation Sans',sans-serif;letter-spacing:-0.648px;">1/6/2021 7:56:01 PM: ReportModel_SampleOrders.Rmd: Job started on server ASTWKS251. Job Id 11.</span>
<span style="left:472.5px;top:835.65px;font-size:14.7px;color:#111;font-family:'Liberation Sans',sans-serif;letter-spacing:-1.844px;">56</span>
<span style="left:521.3px;top:835.65px;font-size:14.7px;color:#111;font-family:'Liberation Sans',sans-serif;letter-spacing:-0.775px;">ASTWKS251:9260</span>
<span style="left:679.9px;top:835.65px;font-size:14.7px;color:#111;font-family:'Liberation Sans',sans-serif;letter-spacing:0.350px;">11</span>
<span style="left:713.5px;top:835.65px;font-size:14.7px;color:#111;font-family:'Liberation Sans',sans-serif;">:</span>
<span style="left:733.7px;top:835.65px;font-size:14.7px;color:#111;font-family:'Liberation Sans',sans-serif;letter-spacing:-0.539px;">1/6/2021 7:56:01 PM: Destination</span>
<span style="left:943px;top:835.65px;font-size:14.7px;color:#0000ee;font-family:'Liberation Sans',sans-serif;letter-spacing:-0.400px;"><a>file://C:\Users\tooba.tariq\Desktop\exported-data.xlsx</a></span>
<span style="left:472.5px;top:863.15px;font-size:14.7px;color:#111;font-family:'Liberation Sans',sans-serif;letter-spacing:-1.844px;">57</span>
<span style="left:521.3px;top:863.15px;font-size:14.7px;color:#111;font-family:'Liberation Sans',sans-serif;letter-spacing:-0.775px;">ASTWKS251:9260</span>
<span style="left:679.9px;top:863.15px;font-size:14.7px;color:#111;font-family:'Liberation Sans',sans-serif;letter-spacing:0.350px;">11</span>
<span style="left:713.5px;top:863.15px;font-size:14.7px;color:#111;font-family:'Liberation Sans',sans-serif;">:</span>
<span style="left:733.7px;top:863.15px;font-size:14.7px;color:#111;font-family:'Liberation Sans',sans-serif;letter-spacing:-0.528px;">1/6/2021 7:56:01 PM: Log: Record level log  written to</span>
<span style="left:1067.7px;top:863.15px;font-size:14.7px;color:#0000ee;font-family:'Liberation Sans',sans-serif;letter-spacing:-0.503px;"><a>file://C:\Windows\TEMP\Astera\ReportModel_SampleOrders_log.prof</a></span>
<span style="left:472.5px;top:890.65px;font-size:14.7px;color:#111;font-family:'Liberation Sans',sans-serif;letter-spacing:-1.844px;">58</span>
<span style="left:521.3px;top:890.65px;font-size:14.7px;color:#111;font-family:'Liberation Sans',sans-serif;letter-spacing:-0.775px;">ASTWKS251:9260</span>
<span style="left:679.9px;top:890.65px;font-size:14.7px;color:#111;font-family:'Liberation Sans',sans-serif;letter-spacing:0.350px;">11</span>
<span style="left:713.5px;top:890.65px;font-size:14.7px;color:#111;font-family:'Liberation Sans',sans-serif;">:</span>
<span style="left:733.7px;top:890.65px;font-size:14.7px;color:#111;font-family:'Liberation Sans',sans-serif;letter-spacing:-0.639px;">1/6/2021 7:56:01 PM: ReportModel_SampleOrders.Rmd: Job Id 11. Job ended. Elapsed Time: 00:00:00.481</span>
<span style="left:7.5px;top:1001.70px;font-size:14.6px;color:#444b55;font-family:'Liberation Sans',sans-serif;letter-spacing:-0.335px;">Job Progress</span>
<span style="left:105px;top:1001.70px;font-size:14.6px;color:#444b55;font-family:'Liberation Sans',sans-serif;letter-spacing:-0.100px;">Verify</span>
<span style="left:156.3px;top:1001.70px;font-size:14.6px;color:#444b55;font-family:'Liberation Sans',sans-serif;letter-spacing:-0.191px;">Data Preview</span>
<span style="left:256px;top:1001.70px;font-size:14.6px;color:#444b55;font-family:'Liberation Sans',sans-serif;letter-spacing:0.230px;">Quick Profile</span>
<span style="left:26.3px;top:384.80px;font-size:5.2px;color:#fff;font-family:'Liberation Sans',sans-serif;letter-spacing:-0.336px;font-weight:bold;">CSV</span>
<span style="left:900.5px;top:171.80px;font-size:24px;color:#bcbcbc;font-family:'Liberation Sans',sans-serif;letter-spacing:-1.344px;font-weight:bold;">A</span>
<span style="left:947.4px;top:169.75px;font-size:16.5px;color:#f39a1e;font-family:'Liberation Sans',sans-serif;font-weight:bold;">a</span>
<span style="left:957.3px;top:178.45px;font-size:16.5px;color:#2b8de0;font-family:'Liberation Sans',sans-serif;font-weight:bold;">z</span>
<span style="left:984.3px;top:174.35px;font-size:15.3px;color:#f39a1e;font-family:'Liberation Sans',sans-serif;font-weight:bold;">0</span>
<span style="left:994.5px;top:179.85px;font-size:15.3px;color:#2b8de0;font-family:'Liberation Sans',sans-serif;font-weight:bold;">9</span>
<span style="left:1023px;top:171.80px;font-size:13px;color:#f39a1e;font-family:'Liberation Sans',sans-serif;letter-spacing:-0.131px;font-weight:bold;">a-z</span>
<span style="left:1023.5px;top:184.80px;font-size:10px;color:#2b8de0;font-family:'Liberation Sans',sans-serif;letter-spacing:1.273px;font-weight:bold;">0-9</span>
<span style="left:1097.6px;top:175.10px;font-size:16px;color:#2b8de0;font-family:'Liberation Sans',sans-serif;letter-spacing:1.045px;font-weight:bold;">[ ]</span>
<span style="left:405px;top:75.95px;font-size:20.5px;color:#5e5e5e;font-family:'Liberation Serif',serif;letter-spacing:-1.438px;font-weight:bold;font-style:italic;">Aa</span>
</div></body></html>
